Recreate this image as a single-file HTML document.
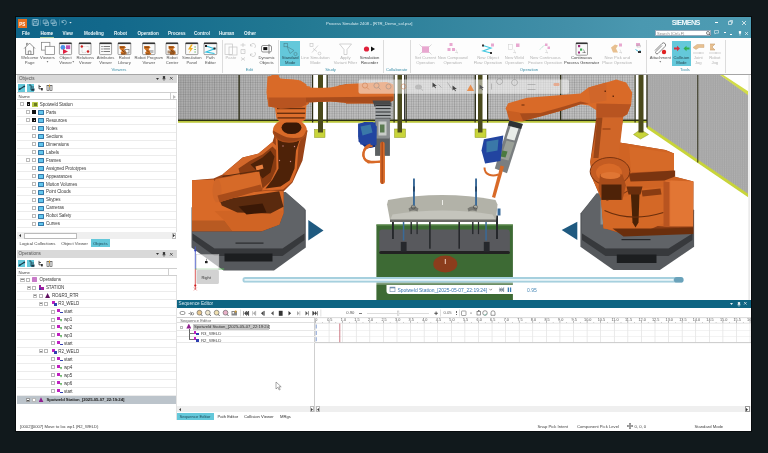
<!DOCTYPE html>
<html><head><meta charset="utf-8">
<style>
*{margin:0;padding:0;box-sizing:border-box}
html,body{width:768px;height:453px;overflow:hidden;background:#11191c;font-family:"Liberation Sans",sans-serif}
body{will-change:transform}
div,span,svg{position:absolute}
.t{white-space:nowrap;font-size:4.4px;color:#333;line-height:5px}
.tab{top:31px;font-size:4.6px;color:#e6f2f6;white-space:nowrap;font-weight:bold;letter-spacing:-0.05px}
.rl{font-size:4.2px;color:#555;text-align:center;line-height:4.6px;white-space:nowrap}
.rl.d{color:#aaa}
.gl{top:67.5px;font-size:4.4px;color:#3b8fa9;white-space:nowrap}
.sep{top:40px;width:1px;height:32px;background:#e0e0e0}
.ph{background:#d9d9d9;font-size:4.6px;color:#555;line-height:8px;padding-left:2px;white-space:nowrap}
.hl{background:#5ec3d8}
.row{height:8px;border-bottom:1px solid #efefef}
.cbx{width:4px;height:4px;border:0.6px solid #777;background:#fff}
.ex{width:4px;height:4px;border:0.5px solid #aaa;background:#fff}
.fd{width:6px;height:4.5px;background:#3aa8d8;border-radius:0.5px}
</style></head><body>
<div style="left:15px;top:16px;width:737.3px;height:416px;background:#080c0e"></div>
<div style="left:16px;top:17px;width:735px;height:413.6px;background:#fff"></div>
<!-- TITLE -->
<div style="left:16px;top:17px;width:735px;height:20.5px;background:linear-gradient(90deg,#0f6488 0%,#12688b 12%,#217892 37%,#428fa8 75%,#4a98b0 85%,#4e9cb3 100%)"></div>
<div style="left:17.5px;top:18.7px;width:9.5px;height:9px;background:#e8701e;color:#fff;font-size:4.5px;font-weight:bold;line-height:11px;text-align:center">PS</div>
<div class="tab" style="left:22px">File</div>
<svg style="left:30px;top:18px;position:absolute" width="45" height="9" viewBox="30 18 45 9"><g fill="none" stroke="#9cc4d6" stroke-width="0.7"><rect x="32.3" y="19.5" width="6.2" height="5.8" rx="0.6"/><rect x="33.8" y="19.5" width="3.2" height="2"/><rect x="33.5" y="23" width="3.8" height="2.3"/><path d="M43.2,20 h4 v3.5 h-4 z M45,22 h3.5 v3.5 h-3.5 z M51,20 h4 v3.5 h-4 z M52.8,22 h3.5 v3.5 h-3.5 z"/><path d="M62,22.5 a2.2,2.2 0 1 1 2.2,2.2 M62,20.5 v2 h2"/></g><rect x="40.3" y="19.5" width="0.5" height="6" fill="#5a9ab4"/><rect x="59" y="19.5" width="0.5" height="6" fill="#5a9ab4"/><path d="M69.3,22 h2.4 l-1.2,1.4 z" fill="#dceaf0"/></svg>
<div class="tab" style="left:40.5px;color:#fff">Home</div>
<div style="left:40px;top:36.5px;width:14px;height:1.2px;background:#a4c89c"></div>
<div class="tab" style="left:62.5px">View</div>
<div class="tab" style="left:84px">Modeling</div>
<div class="tab" style="left:114px">Robot</div>
<div class="tab" style="left:137.5px">Operation</div>
<div class="tab" style="left:168px">Process</div>
<div class="tab" style="left:194px">Control</div>
<div class="tab" style="left:219px">Human</div>
<div class="tab" style="left:244px">Other</div>
<div class="t" style="left:326px;top:20.5px;color:#d8ecf2;font-size:4.2px">Process Simulate 2408 - [RTR_Demo_sol.psz]</div>
<div style="left:671.8px;top:18.6px;font-size:7.3px;color:#eef7fa;font-weight:bold;white-space:nowrap;letter-spacing:-0.7px;line-height:8px">SIEMENS</div>
<div style="left:714.5px;top:22.3px;width:3px;height:0.7px;background:#fff"></div>
<svg style="left:728px;top:20px;position:absolute" width="5" height="5" viewBox="0 0 5 5"><path d="M1.5,0.5 h3 v3 M0.5,1.5 h3 v3 h-3 z" fill="none" stroke="#fff" stroke-width="0.6"/></svg>
<svg style="left:742px;top:20.5px;position:absolute" width="4" height="4" viewBox="0 0 4 4"><path d="M0,0 L4,4 M4,0 L0,4" stroke="#fff" stroke-width="0.7"/></svg>
<div style="left:655px;top:30px;width:56px;height:6px;background:#fff;border:0.5px solid #9ab"></div>
<div class="t" style="left:657px;top:30.5px;color:#888;font-size:4px">Search (Ctrl+F)</div>
<svg style="left:706px;top:30.5px;position:absolute" width="5" height="5" viewBox="0 0 5 5"><circle cx="2" cy="2" r="1.5" fill="none" stroke="#333" stroke-width="0.6"/><path d="M3,3 L4.5,4.5" stroke="#333" stroke-width="0.7"/></svg>
<svg style="left:714px;top:30px;position:absolute" width="5" height="5" viewBox="0 0 5 5"><path d="M0.5,0.5 h4 v2.6 h-2.6 l-1,1 v-1 h-0.4 z" fill="none" stroke="#fff" stroke-width="0.5"/></svg>
<div style="left:724.3px;top:32px;width:1.5px;height:0.6px;background:#fff"></div>
<div style="left:730px;top:34px;width:2px;height:0.6px;background:#fff"></div>
<svg style="left:737.5px;top:31px;position:absolute" width="4" height="5" viewBox="0 0 4 5"><rect x="0.9" y="0" width="2.2" height="2.8" rx="0.6" fill="#fff"/><rect x="1.7" y="2.8" width="0.6" height="1.8" fill="#fff"/></svg>
<svg style="left:745px;top:31.5px;position:absolute" width="3" height="3" viewBox="0 0 3 3"><path d="M0,0 L3,3 M3,0 L0,3" stroke="#fff" stroke-width="0.6"/></svg>
<!-- RIBBON -->
<div style="left:16px;top:37.5px;width:735px;height:37px;background:#fdfdfd;border-bottom:1px solid #a6a6a6"></div>
<div style="left:280.4px;top:40.9px;width:19.6px;height:24.8px;background:#64c8da;"></div>
<div style="left:671.9px;top:41.2px;width:19px;height:24.8px;background:#64c8da;"></div>
<div style="left:221.7px;top:39.5px;width:0.6px;height:33px;background:#dcdcdc;"></div>
<div style="left:277.9px;top:39.5px;width:0.6px;height:33px;background:#dcdcdc;"></div>
<div style="left:383px;top:39.5px;width:0.6px;height:33px;background:#dcdcdc;"></div>
<div style="left:410.3px;top:39.5px;width:0.6px;height:33px;background:#dcdcdc;"></div>
<div style="left:646px;top:39.5px;width:0.6px;height:33px;background:#dcdcdc;"></div>
<div style="left:724.6px;top:39.5px;width:0.6px;height:33px;background:#dcdcdc;"></div>
<div class="t" style="left:-10.399999999999999px;width:80px;text-align:center;top:55.3px;font-size:4.2px;color:#555;">Welcome</div>
<div class="t" style="left:-10.399999999999999px;width:80px;text-align:center;top:59.9px;font-size:4.2px;color:#555;">Page</div>
<div class="t" style="left:7.5px;width:80px;text-align:center;top:55.3px;font-size:4.2px;color:#555;">Viewers</div>
<div class="t" style="left:25.5px;width:80px;text-align:center;top:55.3px;font-size:4.2px;color:#555;">Object</div>
<div class="t" style="left:25.5px;width:80px;text-align:center;top:59.9px;font-size:4.2px;color:#555;">Viewer</div>
<div class="t" style="left:45.3px;width:80px;text-align:center;top:55.3px;font-size:4.2px;color:#555;">Relations</div>
<div class="t" style="left:45.3px;width:80px;text-align:center;top:59.9px;font-size:4.2px;color:#555;">Viewer</div>
<div class="t" style="left:65.6px;width:80px;text-align:center;top:55.3px;font-size:4.2px;color:#555;">Attributes</div>
<div class="t" style="left:65.6px;width:80px;text-align:center;top:59.9px;font-size:4.2px;color:#555;">Viewer</div>
<div class="t" style="left:84.4px;width:80px;text-align:center;top:55.3px;font-size:4.2px;color:#555;">Robot</div>
<div class="t" style="left:84.4px;width:80px;text-align:center;top:59.9px;font-size:4.2px;color:#555;">Library</div>
<div class="t" style="left:108.80000000000001px;width:80px;text-align:center;top:55.3px;font-size:4.2px;color:#555;">Robot Program</div>
<div class="t" style="left:108.80000000000001px;width:80px;text-align:center;top:59.9px;font-size:4.2px;color:#555;">Viewer</div>
<div class="t" style="left:132px;width:80px;text-align:center;top:55.3px;font-size:4.2px;color:#555;">Robot</div>
<div class="t" style="left:132px;width:80px;text-align:center;top:59.9px;font-size:4.2px;color:#555;">Center</div>
<div class="t" style="left:151.8px;width:80px;text-align:center;top:55.3px;font-size:4.2px;color:#555;">Simulation</div>
<div class="t" style="left:151.8px;width:80px;text-align:center;top:59.9px;font-size:4.2px;color:#555;">Panel</div>
<div class="t" style="left:170.4px;width:80px;text-align:center;top:55.3px;font-size:4.2px;color:#555;">Path</div>
<div class="t" style="left:170.4px;width:80px;text-align:center;top:59.9px;font-size:4.2px;color:#555;">Editor</div>
<div class="t" style="left:190.9px;width:80px;text-align:center;top:55.3px;font-size:4.2px;color:#b4b4b4;">Paste</div>
<div class="t" style="left:226.60000000000002px;width:80px;text-align:center;top:55.3px;font-size:4.2px;color:#555;">Dynamic</div>
<div class="t" style="left:226.60000000000002px;width:80px;text-align:center;top:59.9px;font-size:4.2px;color:#555;">Objects</div>
<div class="t" style="left:250.2px;width:80px;text-align:center;top:55.3px;font-size:4.2px;color:#2a4a55;">Standard</div>
<div class="t" style="left:250.2px;width:80px;text-align:center;top:59.9px;font-size:4.2px;color:#2a4a55;">Mode</div>
<div class="t" style="left:275.4px;width:80px;text-align:center;top:55.3px;font-size:4.2px;color:#b4b4b4;">Line Simulation</div>
<div class="t" style="left:275.4px;width:80px;text-align:center;top:59.9px;font-size:4.2px;color:#b4b4b4;">Mode</div>
<div class="t" style="left:305.4px;width:80px;text-align:center;top:55.3px;font-size:4.2px;color:#b4b4b4;">Apply</div>
<div class="t" style="left:305.4px;width:80px;text-align:center;top:59.9px;font-size:4.2px;color:#b4b4b4;">Variant Filter</div>
<div class="t" style="left:329.5px;width:80px;text-align:center;top:55.3px;font-size:4.2px;color:#444;">Simulation</div>
<div class="t" style="left:329.5px;width:80px;text-align:center;top:59.9px;font-size:4.2px;color:#444;">Recorder</div>
<div class="t" style="left:385.4px;width:80px;text-align:center;top:55.3px;font-size:4.2px;color:#b4b4b4;">Set Current</div>
<div class="t" style="left:385.4px;width:80px;text-align:center;top:59.9px;font-size:4.2px;color:#b4b4b4;">Operation</div>
<div class="t" style="left:412.7px;width:80px;text-align:center;top:55.3px;font-size:4.2px;color:#b4b4b4;">New Compound</div>
<div class="t" style="left:412.7px;width:80px;text-align:center;top:59.9px;font-size:4.2px;color:#b4b4b4;">Operation</div>
<div class="t" style="left:448px;width:80px;text-align:center;top:55.3px;font-size:4.2px;color:#b4b4b4;">New Object</div>
<div class="t" style="left:448px;width:80px;text-align:center;top:59.9px;font-size:4.2px;color:#b4b4b4;">Flow Operation</div>
<div class="t" style="left:474.29999999999995px;width:80px;text-align:center;top:55.3px;font-size:4.2px;color:#b4b4b4;">New Weld</div>
<div class="t" style="left:474.29999999999995px;width:80px;text-align:center;top:59.9px;font-size:4.2px;color:#b4b4b4;">Operation</div>
<div class="t" style="left:505.29999999999995px;width:80px;text-align:center;top:55.3px;font-size:4.2px;color:#b4b4b4;">New Continuous</div>
<div class="t" style="left:505.29999999999995px;width:80px;text-align:center;top:59.9px;font-size:4.2px;color:#b4b4b4;">Feature Operation</div>
<div class="t" style="left:541.5px;width:80px;text-align:center;top:55.3px;font-size:4.2px;color:#444;">Continuous</div>
<div class="t" style="left:541.5px;width:80px;text-align:center;top:59.9px;font-size:4.2px;color:#444;">Process Generator</div>
<div class="t" style="left:577.2px;width:80px;text-align:center;top:55.3px;font-size:4.2px;color:#b4b4b4;">New Pick and</div>
<div class="t" style="left:577.2px;width:80px;text-align:center;top:59.9px;font-size:4.2px;color:#b4b4b4;">Place Operation</div>
<div class="t" style="left:620.3px;width:80px;text-align:center;top:55.3px;font-size:4.2px;color:#555;">Attachment</div>
<div class="t" style="left:641.4px;width:80px;text-align:center;top:55.3px;font-size:4.2px;color:#2a4a55;">Collision</div>
<div class="t" style="left:641.4px;width:80px;text-align:center;top:59.9px;font-size:4.2px;color:#2a4a55;">Mode</div>
<div class="t" style="left:658.3px;width:80px;text-align:center;top:55.3px;font-size:4.2px;color:#b4b4b4;">Joint</div>
<div class="t" style="left:658.3px;width:80px;text-align:center;top:59.9px;font-size:4.2px;color:#b4b4b4;">Jog</div>
<div class="t" style="left:674.8px;width:80px;text-align:center;top:55.3px;font-size:4.2px;color:#b4b4b4;">Robot</div>
<div class="t" style="left:674.8px;width:80px;text-align:center;top:59.9px;font-size:4.2px;color:#b4b4b4;">Jog</div>
<div class="t" style="left:79px;width:80px;text-align:center;top:67.2px;font-size:4.2px;color:#3b8fa9;">Viewers</div>
<div class="t" style="left:209.4px;width:80px;text-align:center;top:67.2px;font-size:4.2px;color:#3b8fa9;">Edit</div>
<div class="t" style="left:290.6px;width:80px;text-align:center;top:67.2px;font-size:4.2px;color:#3b8fa9;">Study</div>
<div class="t" style="left:356.6px;width:80px;text-align:center;top:67.2px;font-size:4.2px;color:#3b8fa9;">Collaborate</div>
<div class="t" style="left:489px;width:80px;text-align:center;top:67.2px;font-size:4.2px;color:#3b8fa9;">Operation</div>
<div class="t" style="left:645px;width:80px;text-align:center;top:67.2px;font-size:4.2px;color:#3b8fa9;">Tools</div>
<svg style="left:0;top:0;position:absolute" width="768" height="80" viewBox="0 0 768 80"><polygon points="46.6,61.3 48.4,61.3 47.5,62.5" fill="#555"/><polygon points="72.4,61.3 74.2,61.3 73.3,62.5" fill="#555"/><polygon points="659.4,61.3 661.2,61.3 660.3,62.5" fill="#555"/></svg><svg style="left:16px;top:37.5px;position:absolute" width="735" height="37" viewBox="16 37.5 735 37"><path d="M24.2,48 L29.6,42.6 L35,48 M25.6,46.6 V54 H33.6 V46.6 M28.3,54 V50.5 H30.9 V54 M26.5,45 V42.8 H27.6 V44" fill="none" stroke="#666" stroke-width="0.7"/><rect x="41.5" y="41.8" width="8.4" height="7.8" fill="#fff" stroke="#777" stroke-width="0.7"/><rect x="45.2" y="45.8" width="9.2" height="8.3" fill="#fff" stroke="#777" stroke-width="0.7"/><rect x="59.4" y="42.2" width="12.2" height="11.9" rx="0.8" fill="#fafafa" stroke="#777" stroke-width="0.7"/><rect x="59.4" y="42.2" width="12.2" height="1.4" fill="#333"/><circle cx="62.9" cy="46.9" r="2.4" fill="#4a90e8"/><rect x="66" y="44.8" width="4.2" height="3.8" fill="#c850b0"/><path d="M63,48.6 L68,51 L63,53.4 Z" fill="#e02040"/><rect x="79" y="42.2" width="12" height="11.9" rx="0.8" fill="#fafafa" stroke="#777" stroke-width="0.7"/><rect x="79" y="42.2" width="12" height="1.4" fill="#333"/><circle cx="81.8" cy="46" r="1.2" fill="#d02020"/><circle cx="88" cy="51" r="1.3" fill="#d02020"/><path d="M83,46 H89 V50 M82,48 V52 H86" fill="none" stroke="#999" stroke-width="0.4" stroke-dasharray="0.8,0.6"/><rect x="99.6" y="42.2" width="12" height="11.9" rx="0.8" fill="#fafafa" stroke="#777" stroke-width="0.7"/><rect x="99.6" y="42.2" width="12" height="1.4" fill="#333"/><g fill="#444"><rect x="101.5" y="45.5" width="1" height="1"/><rect x="101.5" y="48" width="1" height="1"/><rect x="101.5" y="50.5" width="1" height="1"/><rect x="103.5" y="45.6" width="6.5" height="0.7"/><rect x="103.5" y="48.1" width="6.5" height="0.7"/><rect x="103.5" y="50.6" width="6.5" height="0.7"/></g><rect x="118" y="42.2" width="12.8" height="11.9" rx="0.8" fill="#fafafa" stroke="#777" stroke-width="0.7"/><rect x="118" y="42.2" width="12.8" height="1.4" fill="#333"/><path d="M119.5,45.5 h5 l1.5,1.5 l-2,1.5 l2.5,3.5 v2 h-5 l-1,-2 l1.5,-1.5 l-2.5,-2.5 z" fill="#d07020"/><path d="M120,46.7 h4.5 M122,49.5 l2.5,2.5 M121,53.5 h4" stroke="#5a3010" stroke-width="0.7"/><rect x="125" y="49" width="4" height="3.5" fill="none" stroke="#555" stroke-width="0.6"/><rect x="142.6" y="42.2" width="12.4" height="11.9" rx="0.8" fill="#fafafa" stroke="#777" stroke-width="0.7"/><rect x="142.6" y="42.2" width="12.4" height="1.4" fill="#333"/><path d="M144.1,45.5 h5 l1.5,1.5 l-2,1.5 l2.5,3.5 v2 h-5 l-1,-2 l1.5,-1.5 l-2.5,-2.5 z" fill="#d07020"/><path d="M144.6,46.7 h4.5 M146.6,49.5 l2.5,2.5 M145.6,53.5 h4" stroke="#5a3010" stroke-width="0.7"/><rect x="150" y="49.5" width="3.5" height="3" fill="#bbb"/><rect x="166" y="42.2" width="12" height="11.9" rx="0.8" fill="#fafafa" stroke="#777" stroke-width="0.7"/><rect x="166" y="42.2" width="12" height="1.4" fill="#333"/><path d="M168.5,45.5 h5 l1.5,1.5 l-2,1.5 l2.5,3.5 v2 h-5 l-1,-2 l1.5,-1.5 l-2.5,-2.5 z" fill="#d07020"/><path d="M169,46.7 h4.5 M171,49.5 l2.5,2.5 M170,53.5 h4" stroke="#5a3010" stroke-width="0.7"/><rect x="167.5" y="50" width="8" height="3" fill="#7a4a20" opacity="0.6"/><rect x="185.6" y="42.2" width="12.3" height="11.9" rx="0.8" fill="#fafafa" stroke="#777" stroke-width="0.7"/><rect x="185.6" y="42.2" width="12.3" height="1.4" fill="#333"/><path d="M191,44 L188,49 H190.5 L188.8,53 L193,47.5 H190.8 L192.8,44 Z" fill="#f0b020"/><g fill="#4a4"><rect x="194.5" y="46" width="1.2" height="1"/><rect x="194.5" y="48.5" width="1.2" height="1"/><rect x="194.5" y="51" width="1.2" height="1"/></g><rect x="204" y="42.2" width="12.8" height="11.9" rx="0.8" fill="#fafafa" stroke="#777" stroke-width="0.7"/><rect x="204" y="42.2" width="12.8" height="1.4" fill="#333"/><path d="M206,45.5 L214.5,48.2 L206,51.5 L214.5,53" fill="none" stroke="#30c0e0" stroke-width="1.2"/><rect x="205" y="44.5" width="2" height="2" fill="#222"/><rect x="213.5" y="47" width="2" height="2" fill="#222"/><g fill="none" stroke="#c4c4c4" stroke-width="0.7"><rect x="225" y="43.5" width="7.5" height="10.5"/><rect x="229" y="46.5" width="8" height="8"/><path d="M240.5,44.5 h5 M243,42.5 v4 M241,49 h4 v4 h-4 z M243,50 l1,1 M241,57 l4,3 M245,57 l-4,3 M250.5,45.5 a2.5,2.5 0 1 1 4,2 M250.5,43.5 v2 h2 M250.5,53.5 a2.5,2.5 0 1 0 4,-2 M250.5,55.5 v-2 h2"/></g><rect x="261.5" y="45" width="10" height="6.5" rx="1.5" fill="#fff" stroke="#666" stroke-width="0.7"/><rect x="263.3" y="46.6" width="4" height="3" fill="#111"/><path d="M269,43.5 v10" stroke="#666" stroke-width="0.7"/><g fill="none" stroke="#4a7a86" stroke-width="0.55"><rect x="284" y="42.8" width="3.5" height="3.5"/><path d="M287,46 L290,53 L294,50 Z"/><circle cx="295.5" cy="53.5" r="1.6"/></g><g fill="none" stroke="#c0c0c0" stroke-width="0.6"><rect x="310" y="43" width="3" height="3"/><path d="M312,52 L318,45 M313,48 L317,51"/><circle cx="319.5" cy="53" r="1.4"/></g><path d="M339.5,43.5 H351.5 L347,49 V54 H344 V49 Z" fill="#fff" stroke="#c0c0c0" stroke-width="0.7"/><circle cx="366.5" cy="48.5" r="2.6" fill="#e0203a"/><path d="M371,46 L375,48.5 L371,51 Z" fill="#111"/><g stroke="#c0c0c0" stroke-width="0.6" fill="none"><path d="M419.5,44 l2.5,2.5 M431.5,44 l-2.5,2.5 M419.5,54 l2.5,-2.5 M431.5,54 l-2.5,-2.5"/></g><rect x="422" y="45.8" width="7" height="6.5" fill="#e8a8d0"/><g fill="#e8a8d0"><rect x="449.5" y="42.5" width="3" height="3"/><rect x="447.5" y="47.5" width="3" height="3"/><rect x="452" y="47.5" width="3" height="3"/></g><path d="M456,49 l1.5,4 M455,52 h3" stroke="#ccc" stroke-width="0.5"/><path d="M483,45 L491,47.5 L483,50.5 L491,52.5" fill="none" stroke="#40c8e0" stroke-width="1.1"/><rect x="482" y="44" width="2" height="2" fill="#333"/><rect x="490" y="51.5" width="2" height="2" fill="#333"/><rect x="491" y="43" width="3" height="3" fill="#e8a8d0"/><g fill="none" stroke="#ccc" stroke-width="0.5"><rect x="508.5" y="44" width="4" height="5"/></g><rect x="516" y="43" width="3.5" height="3.5" fill="#e8a8d0"/><path d="M514,49 l1.5,4 M513,52 h3" stroke="#ccc" stroke-width="0.5"/><path d="M540,49 q3,-4 7,-5" fill="none" stroke="#a8e0c8" stroke-width="1" stroke-dasharray="1,0.6"/><g fill="#e8a8d0"><rect x="545" y="43" width="2.5" height="2.5"/><rect x="547.5" y="46" width="2.5" height="2.5"/></g><path d="M546,49 l1.5,4 M545,52 h3" stroke="#ccc" stroke-width="0.5"/><rect x="576" y="42.2" width="11.5" height="12.5" rx="0.8" fill="#fafafa" stroke="#777" stroke-width="0.7"/><rect x="576" y="42.2" width="11.5" height="1.4" fill="#333"/><rect x="578" y="44.5" width="2.2" height="2.2" fill="#a03080"/><rect x="580" y="48" width="2.2" height="2.2" fill="#3aaa50"/><rect x="578" y="51" width="2" height="2" fill="#a03080"/><path d="M583.5,49 l1.5,3.5 M582.5,52 h3" stroke="#444" stroke-width="0.5"/><path d="M611,47 l4,-3 l3,1 l-2,3 l2,4 h-5 z" fill="#e8c090"/><rect x="619" y="43" width="3" height="3" fill="#e8a8d0"/><path d="M620,49 l1.5,4 M619,52 h3" stroke="#ccc" stroke-width="0.5"/><rect x="636" y="42.5" width="4" height="3" fill="#e8a8d0"/><rect x="637" y="44.5" width="3.5" height="2" fill="none" stroke="#999" stroke-width="0.4"/><path d="M635.5,49 l3,2 l2,-1" stroke="#40b8d8" stroke-width="1" fill="none"/><rect x="638" y="50.5" width="3" height="2" fill="#333"/><path d="M655,50 l7,-7 a2,2 0 0 1 3,3 l-7,7 a1.3,1.3 0 0 1 -2,-2 l6,-6" fill="none" stroke="#555" stroke-width="0.7"/><circle cx="664" cy="51.5" r="2.2" fill="#e02020"/><path d="M674,47 h3 v-1.8 l3,2.8 l-3,2.8 v-1.8 h-3 z" fill="#d83040"/><path d="M689.5,47 h-3 v-1.8 l-3,2.8 l3,2.8 v-1.8 h3 z" fill="#30b050"/><path d="M693,47 l4,-3 h7 v3 h-5 l-3,2 z" fill="#e8c090" stroke="#c8a070" stroke-width="0.4"/><path d="M693,52.5 h11 M700,51.5 v2" stroke="#bbb" stroke-width="0.6"/><path d="M710,43.5 h5 l-3,3 l3,3 h-5" fill="#e8c090" stroke="#c8a070" stroke-width="0.6"/><path d="M709,52.5 h12 M716,51.5 v2" stroke="#bbb" stroke-width="0.6"/></svg>

<!-- OBJECTS PANEL -->
<div class="ph" style="left:17px;top:74.5px;width:160px;height:8px">Objects</div>
<svg style="left:156.2px;top:77.8px;position:absolute;overflow:visible" width="3" height="2" viewBox="0 0 3 2"><polygon points="0,0 3,0 1.5,2" fill="#333"/></svg>
<svg style="left:162.4px;top:76.3px;position:absolute;overflow:visible" width="4" height="5" viewBox="0 0 4 5"><rect x="0.9" y="0" width="2.2" height="2.8" rx="0.6" fill="#333"/><rect x="0.3" y="2.6" width="3.4" height="0.6" fill="#333"/><rect x="1.7" y="3" width="0.6" height="1.8" fill="#333"/></svg>
<svg style="left:170.2px;top:77px;position:absolute;overflow:visible" width="2.6" height="2.6" viewBox="0 0 2.6 2.6"><path d="M0,0 L2.6,2.6 M2.6,0 L0,2.6" stroke="#333" stroke-width="0.7"/></svg>
<div style="left:17.6px;top:84px;width:7.4px;height:7.8px;background:#64c8da;"></div>
<div style="left:27px;top:84px;width:7.3px;height:7.8px;background:#64c8da;"></div>
<svg style="left:17px;top:83px;position:absolute;overflow:visible" width="40" height="9" viewBox="0 0 40 9"><path d="M3,6 L7,3.5" stroke="#1a3a4a" stroke-width="1.1"/><circle cx="2.6" cy="6.2" r="0.9" fill="#1a3a4a"/><circle cx="7.3" cy="3.3" r="0.9" fill="#1a3a4a"/><path d="M12,2 h2 v5 h3 M14,4 h3" fill="none" stroke="#1a3a4a" stroke-width="0.8"/><rect x="14.5" y="5.5" width="3" height="2.2" fill="#1a3a4a"/><path d="M22,1.8 v4 h2.5 M22,3.5 h2" fill="none" stroke="#333" stroke-width="0.8"/><rect x="24" y="5" width="1.8" height="2.4" fill="#333"/><rect x="30" y="2.5" width="2" height="5" fill="none" stroke="#333" stroke-width="0.6"/><rect x="33" y="2.5" width="2" height="5" fill="none" stroke="#333" stroke-width="0.6"/><rect x="32" y="1.5" width="1" height="2.5" fill="#d8a030"/></svg>
<div style="left:17px;top:92.3px;width:160px;height:8.1px;background:#fff;border-top:0.8px solid #cfcfcf;border-bottom:0.8px solid #cfcfcf"></div>
<div style="left:170.3px;top:92.5px;width:0.7px;height:7.6px;background:#cfcfcf;"></div>
<div class="t" style="left:18.4px;top:94px;font-size:4.3px;color:#444;">Name</div>
<svg style="left:172.5px;top:94.6px;position:absolute;overflow:visible" width="3" height="4" viewBox="0 0 3 4"><polygon points="0,0 3,2.0 0,4" fill="#bbb"/></svg>
<div style="left:17px;top:107.60000000000001px;width:159px;height:0.7px;background:#ececec;"></div>
<div style="left:20px;top:102.4px;width:4.4px;height:4px;background:#fff;border:0.5px solid #bbb"></div>
<div style="left:26.6px;top:102.4px;width:3.5px;height:3.8px;background:#111;clip-path:polygon(0 0,100% 0,0 100%)"></div>
<div style="left:26.6px;top:102.4px;width:3.5px;height:3.8px;background:transparent;border:0.5px solid #111"></div>
<div style="left:32.3px;top:101.9px;width:5.3px;height:4.8px;background:#b8c848;border-radius:0.5px"></div>
<div style="left:33.5px;top:103.4px;width:3px;height:2.5px;background:#6a7a20;"></div>
<div class="t" style="left:39.8px;top:101.7px;font-size:4.5px;color:#383838;letter-spacing:-0.06px">Spotweld Station</div>
<div style="left:17px;top:115.58000000000001px;width:159px;height:0.7px;background:#ececec;"></div>
<div style="left:26.1px;top:110.38000000000001px;width:4.4px;height:4px;background:#fff;border:0.5px solid #bbb"></div>
<div style="left:32.3px;top:110.38000000000001px;width:4px;height:3.8px;background:#111;"></div>
<div style="left:38px;top:110.18px;width:6.2px;height:4.6px;background:#62c6ee;border:0.55px solid #3478a8;border-radius:0.6px"></div>
<div class="t" style="left:46px;top:109.68px;font-size:4.5px;color:#383838;letter-spacing:-0.06px">Parts</div>
<div style="left:17px;top:123.56000000000002px;width:159px;height:0.7px;background:#ececec;"></div>
<div style="left:26.1px;top:118.36000000000001px;width:4.4px;height:4px;background:#fff;border:0.5px solid #bbb"></div>
<div style="left:32.3px;top:118.36000000000001px;width:4px;height:3.8px;background:#111;clip-path:polygon(0 0,100% 0,0 100%)"></div>
<div style="left:32.3px;top:118.36000000000001px;width:4px;height:3.8px;background:transparent;border:0.5px solid #111"></div>
<div style="left:38px;top:118.16000000000001px;width:6.2px;height:4.6px;background:#62c6ee;border:0.55px solid #3478a8;border-radius:0.6px"></div>
<div class="t" style="left:46px;top:117.66000000000001px;font-size:4.5px;color:#383838;letter-spacing:-0.06px">Resources</div>
<div style="left:17px;top:131.54px;width:159px;height:0.7px;background:#ececec;"></div>
<div style="left:32px;top:126.34px;width:4px;height:4px;background:#fff;border:0.5px solid #b8b8b8"></div>
<div style="left:38px;top:126.14px;width:6.2px;height:4.6px;background:#62c6ee;border:0.55px solid #3478a8;border-radius:0.6px"></div>
<div class="t" style="left:46px;top:125.64px;font-size:4.5px;color:#383838;letter-spacing:-0.06px">Notes</div>
<div style="left:17px;top:139.51999999999998px;width:159px;height:0.7px;background:#ececec;"></div>
<div style="left:32px;top:134.32px;width:4px;height:4px;background:#fff;border:0.5px solid #b8b8b8"></div>
<div style="left:38px;top:134.12px;width:6.2px;height:4.6px;background:#62c6ee;border:0.55px solid #3478a8;border-radius:0.6px"></div>
<div class="t" style="left:46px;top:133.62px;font-size:4.5px;color:#383838;letter-spacing:-0.06px">Sections</div>
<div style="left:17px;top:147.5px;width:159px;height:0.7px;background:#ececec;"></div>
<div style="left:32px;top:142.3px;width:4px;height:4px;background:#fff;border:0.5px solid #b8b8b8"></div>
<div style="left:38px;top:142.10000000000002px;width:6.2px;height:4.6px;background:#62c6ee;border:0.55px solid #3478a8;border-radius:0.6px"></div>
<div class="t" style="left:46px;top:141.60000000000002px;font-size:4.5px;color:#383838;letter-spacing:-0.06px">Dimensions</div>
<div style="left:17px;top:155.48px;width:159px;height:0.7px;background:#ececec;"></div>
<div style="left:32px;top:150.28px;width:4px;height:4px;background:#fff;border:0.5px solid #b8b8b8"></div>
<div style="left:38px;top:150.08px;width:6.2px;height:4.6px;background:#62c6ee;border:0.55px solid #3478a8;border-radius:0.6px"></div>
<div class="t" style="left:46px;top:149.58px;font-size:4.5px;color:#383838;letter-spacing:-0.06px">Labels</div>
<div style="left:17px;top:163.45999999999998px;width:159px;height:0.7px;background:#ececec;"></div>
<div style="left:26.1px;top:158.26px;width:4.4px;height:4px;background:#fff;border:0.5px solid #bbb"></div>
<div style="left:32px;top:158.26px;width:4px;height:4px;background:#fff;border:0.5px solid #b8b8b8"></div>
<div style="left:38px;top:158.06px;width:6.2px;height:4.6px;background:#62c6ee;border:0.55px solid #3478a8;border-radius:0.6px"></div>
<div class="t" style="left:46px;top:157.56px;font-size:4.5px;color:#383838;letter-spacing:-0.06px">Frames</div>
<div style="left:17px;top:171.44px;width:159px;height:0.7px;background:#ececec;"></div>
<div style="left:32px;top:166.24px;width:4px;height:4px;background:#fff;border:0.5px solid #b8b8b8"></div>
<div style="left:38px;top:166.04000000000002px;width:6.2px;height:4.6px;background:#62c6ee;border:0.55px solid #3478a8;border-radius:0.6px"></div>
<div class="t" style="left:46px;top:165.54000000000002px;font-size:4.5px;color:#383838;letter-spacing:-0.06px">Assigned Prototypes</div>
<div style="left:17px;top:179.42000000000002px;width:159px;height:0.7px;background:#ececec;"></div>
<div style="left:32px;top:174.22000000000003px;width:4px;height:4px;background:#fff;border:0.5px solid #b8b8b8"></div>
<div style="left:38px;top:174.02000000000004px;width:6.2px;height:4.6px;background:#62c6ee;border:0.55px solid #3478a8;border-radius:0.6px"></div>
<div class="t" style="left:46px;top:173.52000000000004px;font-size:4.5px;color:#383838;letter-spacing:-0.06px">Appearances</div>
<div style="left:17px;top:187.4px;width:159px;height:0.7px;background:#ececec;"></div>
<div style="left:32px;top:182.20000000000002px;width:4px;height:4px;background:#fff;border:0.5px solid #b8b8b8"></div>
<div style="left:38px;top:182.00000000000003px;width:6.2px;height:4.6px;background:#62c6ee;border:0.55px solid #3478a8;border-radius:0.6px"></div>
<div class="t" style="left:46px;top:181.50000000000003px;font-size:4.5px;color:#383838;letter-spacing:-0.06px">Motion Volumes</div>
<div style="left:17px;top:195.38px;width:159px;height:0.7px;background:#ececec;"></div>
<div style="left:32px;top:190.18px;width:4px;height:4px;background:#fff;border:0.5px solid #b8b8b8"></div>
<div style="left:38px;top:189.98000000000002px;width:6.2px;height:4.6px;background:#62c6ee;border:0.55px solid #3478a8;border-radius:0.6px"></div>
<div class="t" style="left:46px;top:189.48000000000002px;font-size:4.5px;color:#383838;letter-spacing:-0.06px">Point Clouds</div>
<div style="left:17px;top:203.36px;width:159px;height:0.7px;background:#ececec;"></div>
<div style="left:32px;top:198.16000000000003px;width:4px;height:4px;background:#fff;border:0.5px solid #b8b8b8"></div>
<div style="left:38px;top:197.96000000000004px;width:6.2px;height:4.6px;background:#62c6ee;border:0.55px solid #3478a8;border-radius:0.6px"></div>
<div class="t" style="left:46px;top:197.46000000000004px;font-size:4.5px;color:#383838;letter-spacing:-0.06px">Skypes</div>
<div style="left:17px;top:211.34px;width:159px;height:0.7px;background:#ececec;"></div>
<div style="left:32px;top:206.14000000000001px;width:4px;height:4px;background:#fff;border:0.5px solid #b8b8b8"></div>
<div style="left:38px;top:205.94000000000003px;width:6.2px;height:4.6px;background:#62c6ee;border:0.55px solid #3478a8;border-radius:0.6px"></div>
<div class="t" style="left:46px;top:205.44000000000003px;font-size:4.5px;color:#383838;letter-spacing:-0.06px">Cameras</div>
<div style="left:17px;top:219.32px;width:159px;height:0.7px;background:#ececec;"></div>
<div style="left:32px;top:214.12px;width:4px;height:4px;background:#fff;border:0.5px solid #b8b8b8"></div>
<div style="left:38px;top:213.92000000000002px;width:6.2px;height:4.6px;background:#62c6ee;border:0.55px solid #3478a8;border-radius:0.6px"></div>
<div class="t" style="left:46px;top:213.42000000000002px;font-size:4.5px;color:#383838;letter-spacing:-0.06px">Robot Safety</div>
<div style="left:17px;top:227.3px;width:159px;height:0.7px;background:#ececec;"></div>
<div style="left:32px;top:222.10000000000002px;width:4px;height:4px;background:#fff;border:0.5px solid #b8b8b8"></div>
<div style="left:38px;top:221.90000000000003px;width:6.2px;height:4.6px;background:#62c6ee;border:0.55px solid #3478a8;border-radius:0.6px"></div>
<div class="t" style="left:46px;top:221.40000000000003px;font-size:4.5px;color:#383838;letter-spacing:-0.06px">Curves</div>
<div style="left:17px;top:232.2px;width:159px;height:7px;background:#efefef;"></div>
<svg style="left:19px;top:234px;position:absolute;overflow:visible" width="2" height="3.2" viewBox="0 0 2 3.2"><polygon points="2,0 0,1.6 2,3.2" fill="#333"/></svg>
<div style="left:23.8px;top:232.6px;width:53.4px;height:6.4px;background:#fff;border:0.6px solid #bbb"></div>
<div style="left:172px;top:233px;width:4px;height:6px;background:#fff;border:0.5px solid #bbb"></div>
<svg style="left:173px;top:234.4px;position:absolute;overflow:visible" width="2" height="3.2" viewBox="0 0 2 3.2"><polygon points="0,0 2,1.6 0,3.2" fill="#333"/></svg>
<div class="t" style="left:19.5px;top:241px;font-size:4.3px;color:#444;">Logical Collections</div>
<div class="t" style="left:61.2px;top:241px;font-size:4.3px;color:#444;">Object Viewer</div>
<div style="left:90.9px;top:239.3px;width:19.5px;height:7.8px;background:#64c8da;"></div>
<div class="t" style="left:93px;top:241px;font-size:4.3px;color:#1e4a5a;">Objects</div>
<div style="left:17px;top:250.3px;width:160px;height:7.5px;background:#d9d9d9;"></div>
<div class="t" style="left:18.4px;top:251.2px;font-size:4.6px;color:#555;">Operations</div>
<svg style="left:156.2px;top:253.3px;position:absolute;overflow:visible" width="3" height="2" viewBox="0 0 3 2"><polygon points="0,0 3,0 1.5,2" fill="#333"/></svg>
<svg style="left:162.4px;top:251.8px;position:absolute;overflow:visible" width="4" height="5" viewBox="0 0 4 5"><rect x="0.9" y="0" width="2.2" height="2.8" rx="0.6" fill="#333"/><rect x="0.3" y="2.6" width="3.4" height="0.6" fill="#333"/><rect x="1.7" y="3" width="0.6" height="1.8" fill="#333"/></svg>
<svg style="left:170.2px;top:252.6px;position:absolute;overflow:visible" width="2.6" height="2.6" viewBox="0 0 2.6 2.6"><path d="M0,0 L2.6,2.6 M2.6,0 L0,2.6" stroke="#333" stroke-width="0.7"/></svg>
<div style="left:17.6px;top:259.5px;width:7.4px;height:7.8px;background:#64c8da;"></div>
<div style="left:27px;top:259.5px;width:7.3px;height:7.8px;background:#64c8da;"></div>
<svg style="left:17px;top:258.5px;position:absolute;overflow:visible" width="40" height="9" viewBox="0 0 40 9"><path d="M3,6 L7,3.5" stroke="#1a3a4a" stroke-width="1.1"/><circle cx="2.6" cy="6.2" r="0.9" fill="#1a3a4a"/><circle cx="7.3" cy="3.3" r="0.9" fill="#1a3a4a"/><path d="M12,2 h2 v5 h3 M14,4 h3" fill="none" stroke="#1a3a4a" stroke-width="0.8"/><rect x="14.5" y="5.5" width="3" height="2.2" fill="#1a3a4a"/><path d="M22,1.8 v4 h2.5 M22,3.5 h2" fill="none" stroke="#333" stroke-width="0.8"/><rect x="24" y="5" width="1.8" height="2.4" fill="#333"/><rect x="30" y="2.5" width="2" height="5" fill="none" stroke="#333" stroke-width="0.6"/><rect x="33" y="2.5" width="2" height="5" fill="none" stroke="#333" stroke-width="0.6"/><rect x="32" y="1.5" width="1" height="2.5" fill="#d8a030"/></svg>
<div style="left:17px;top:268px;width:160px;height:7.6px;background:#fff;border-top:0.8px solid #cfcfcf;border-bottom:0.8px solid #cfcfcf"></div>
<div style="left:168px;top:268.3px;width:0.7px;height:7.2px;background:#cfcfcf;"></div>
<div class="t" style="left:18.4px;top:269.5px;font-size:4.3px;color:#444;">Name</div>
<div style="left:17px;top:282.8px;width:159px;height:0.7px;background:#ececec;"></div>
<div style="left:20.4px;top:277.6px;width:4.2px;height:4px;background:#fff;border:0.5px solid #c4c4c4"></div>
<div style="left:21.299999999999997px;top:279.3px;width:2.4px;height:0.5px;background:#888;"></div>
<div style="left:26.2px;top:277.6px;width:4px;height:4px;background:#fff;border:0.5px solid #b8b8b8"></div>
<div style="left:32.3px;top:277.1px;width:4.5px;height:5px;background:#c87ac8;border-radius:0.5px"></div>
<div class="t" style="left:39.5px;top:276.90000000000003px;font-size:4.5px;color:#383838;letter-spacing:-0.06px">Operations</div>
<div style="left:17px;top:290.78000000000003px;width:159px;height:0.7px;background:#ececec;"></div>
<div style="left:26.8px;top:285.58000000000004px;width:4.2px;height:4px;background:#fff;border:0.5px solid #c4c4c4"></div>
<div style="left:27.7px;top:287.28000000000003px;width:2.4px;height:0.5px;background:#888;"></div>
<div style="left:32.2px;top:285.58000000000004px;width:4px;height:4px;background:#fff;border:0.5px solid #b8b8b8"></div>
<div style="left:38.7px;top:285.28000000000003px;width:2.4px;height:2.4px;background:#a020a0;"></div>
<div style="left:41.2px;top:287.38000000000005px;width:2.4px;height:2.4px;background:#a020a0;"></div>
<div style="left:38.7px;top:287.78000000000003px;width:2.2px;height:2px;background:#4040a0;"></div>
<div class="t" style="left:45.9px;top:284.88000000000005px;font-size:4.5px;color:#383838;letter-spacing:-0.06px">STATION</div>
<div style="left:17px;top:298.76px;width:159px;height:0.7px;background:#ececec;"></div>
<div style="left:32.8px;top:293.56px;width:4.2px;height:4px;background:#fff;border:0.5px solid #c4c4c4"></div>
<div style="left:33.699999999999996px;top:295.26px;width:2.4px;height:0.5px;background:#888;"></div>
<div style="left:38.6px;top:293.56px;width:4px;height:4px;background:#fff;border:0.5px solid #b8b8b8"></div>
<div style="left:45.1px;top:293.06px;width:5px;height:5px;background:#601060;clip-path:polygon(50% 0,100% 100%,0 100%)"></div>
<div class="t" style="left:51.9px;top:292.86px;font-size:4.5px;color:#383838;letter-spacing:-0.06px">RO&amp;R3_RTR</div>
<div style="left:17px;top:306.74px;width:159px;height:0.7px;background:#ececec;"></div>
<div style="left:38.6px;top:301.54px;width:4.2px;height:4px;background:#fff;border:0.5px solid #c4c4c4"></div>
<div style="left:39.5px;top:303.24px;width:2.4px;height:0.5px;background:#888;"></div>
<div style="left:44.3px;top:301.54px;width:4px;height:4px;background:#fff;border:0.5px solid #b8b8b8"></div>
<div style="left:51.5px;top:300.94px;width:3px;height:3px;background:#c020c0;"></div>
<div style="left:53.8px;top:303.14000000000004px;width:3px;height:3px;background:#3040b0;"></div>
<div class="t" style="left:58.3px;top:300.84000000000003px;font-size:4.5px;color:#383838;letter-spacing:-0.06px">R3_WELD</div>
<div style="left:17px;top:314.72px;width:159px;height:0.7px;background:#ececec;"></div>
<div style="left:50.7px;top:309.52000000000004px;width:4px;height:4px;background:#fff;border:0.5px solid #b8b8b8"></div>
<div style="left:57.3px;top:308.92px;width:3px;height:3px;background:#c020c0;"></div>
<div style="left:59.8px;top:311.72px;width:3px;height:1px;background:#3040b0;"></div>
<div class="t" style="left:64px;top:308.82000000000005px;font-size:4.5px;color:#383838;letter-spacing:-0.06px">start</div>
<div style="left:17px;top:322.7px;width:159px;height:0.7px;background:#ececec;"></div>
<div style="left:50.7px;top:317.5px;width:4px;height:4px;background:#fff;border:0.5px solid #b8b8b8"></div>
<div style="left:57.3px;top:316.9px;width:3px;height:3px;background:#c020c0;"></div>
<div style="left:59.8px;top:319.3px;width:2.5px;height:2.4px;background:#40a040;clip-path:polygon(0 0,100% 0,50% 100%)"></div>
<div class="t" style="left:64px;top:316.8px;font-size:4.5px;color:#383838;letter-spacing:-0.06px">wp1</div>
<div style="left:17px;top:330.68px;width:159px;height:0.7px;background:#ececec;"></div>
<div style="left:50.7px;top:325.48px;width:4px;height:4px;background:#fff;border:0.5px solid #b8b8b8"></div>
<div style="left:57.3px;top:324.88px;width:3px;height:3px;background:#c020c0;"></div>
<div style="left:59.8px;top:327.28000000000003px;width:2.5px;height:2.4px;background:#40a040;clip-path:polygon(0 0,100% 0,50% 100%)"></div>
<div class="t" style="left:64px;top:324.78000000000003px;font-size:4.5px;color:#383838;letter-spacing:-0.06px">wp2</div>
<div style="left:17px;top:338.66px;width:159px;height:0.7px;background:#ececec;"></div>
<div style="left:50.7px;top:333.46000000000004px;width:4px;height:4px;background:#fff;border:0.5px solid #b8b8b8"></div>
<div style="left:57.3px;top:332.86px;width:3px;height:3px;background:#c020c0;"></div>
<div style="left:59.8px;top:335.26000000000005px;width:2.5px;height:2.4px;background:#40a040;clip-path:polygon(0 0,100% 0,50% 100%)"></div>
<div class="t" style="left:64px;top:332.76000000000005px;font-size:4.5px;color:#383838;letter-spacing:-0.06px">wp3</div>
<div style="left:17px;top:346.64000000000004px;width:159px;height:0.7px;background:#ececec;"></div>
<div style="left:50.7px;top:341.44000000000005px;width:4px;height:4px;background:#fff;border:0.5px solid #b8b8b8"></div>
<div style="left:57.3px;top:340.84000000000003px;width:3px;height:3px;background:#c020c0;"></div>
<div style="left:59.8px;top:343.64000000000004px;width:3px;height:1px;background:#3040b0;"></div>
<div class="t" style="left:64px;top:340.74000000000007px;font-size:4.5px;color:#383838;letter-spacing:-0.06px">start</div>
<div style="left:17px;top:354.62px;width:159px;height:0.7px;background:#ececec;"></div>
<div style="left:38.6px;top:349.42px;width:4.2px;height:4px;background:#fff;border:0.5px solid #c4c4c4"></div>
<div style="left:39.5px;top:351.12px;width:2.4px;height:0.5px;background:#888;"></div>
<div style="left:44.3px;top:349.42px;width:4px;height:4px;background:#fff;border:0.5px solid #b8b8b8"></div>
<div style="left:51.5px;top:348.82px;width:3px;height:3px;background:#c020c0;"></div>
<div style="left:53.8px;top:351.02000000000004px;width:3px;height:3px;background:#3040b0;"></div>
<div class="t" style="left:58.3px;top:348.72px;font-size:4.5px;color:#383838;letter-spacing:-0.06px">R2_WELD</div>
<div style="left:17px;top:362.6px;width:159px;height:0.7px;background:#ececec;"></div>
<div style="left:50.7px;top:357.40000000000003px;width:4px;height:4px;background:#fff;border:0.5px solid #b8b8b8"></div>
<div style="left:57.3px;top:356.8px;width:3px;height:3px;background:#c020c0;"></div>
<div style="left:59.8px;top:359.6px;width:3px;height:1px;background:#3040b0;"></div>
<div class="t" style="left:64px;top:356.70000000000005px;font-size:4.5px;color:#383838;letter-spacing:-0.06px">start</div>
<div style="left:17px;top:370.58px;width:159px;height:0.7px;background:#ececec;"></div>
<div style="left:50.7px;top:365.38px;width:4px;height:4px;background:#fff;border:0.5px solid #b8b8b8"></div>
<div style="left:57.3px;top:364.78px;width:3px;height:3px;background:#c020c0;"></div>
<div style="left:59.8px;top:367.18px;width:2.5px;height:2.4px;background:#40a040;clip-path:polygon(0 0,100% 0,50% 100%)"></div>
<div class="t" style="left:64px;top:364.68px;font-size:4.5px;color:#383838;letter-spacing:-0.06px">wp4</div>
<div style="left:17px;top:378.56px;width:159px;height:0.7px;background:#ececec;"></div>
<div style="left:50.7px;top:373.36px;width:4px;height:4px;background:#fff;border:0.5px solid #b8b8b8"></div>
<div style="left:57.3px;top:372.76px;width:3px;height:3px;background:#c020c0;"></div>
<div style="left:59.8px;top:375.16px;width:2.5px;height:2.4px;background:#40a040;clip-path:polygon(0 0,100% 0,50% 100%)"></div>
<div class="t" style="left:64px;top:372.66px;font-size:4.5px;color:#383838;letter-spacing:-0.06px">wp5</div>
<div style="left:17px;top:386.54px;width:159px;height:0.7px;background:#ececec;"></div>
<div style="left:50.7px;top:381.34000000000003px;width:4px;height:4px;background:#fff;border:0.5px solid #b8b8b8"></div>
<div style="left:57.3px;top:380.74px;width:3px;height:3px;background:#c020c0;"></div>
<div style="left:59.8px;top:383.14000000000004px;width:2.5px;height:2.4px;background:#40a040;clip-path:polygon(0 0,100% 0,50% 100%)"></div>
<div class="t" style="left:64px;top:380.64000000000004px;font-size:4.5px;color:#383838;letter-spacing:-0.06px">wp6</div>
<div style="left:17px;top:394.52000000000004px;width:159px;height:0.7px;background:#ececec;"></div>
<div style="left:50.7px;top:389.32000000000005px;width:4px;height:4px;background:#fff;border:0.5px solid #b8b8b8"></div>
<div style="left:57.3px;top:388.72px;width:3px;height:3px;background:#c020c0;"></div>
<div style="left:59.8px;top:391.52000000000004px;width:3px;height:1px;background:#3040b0;"></div>
<div class="t" style="left:64px;top:388.62000000000006px;font-size:4.5px;color:#383838;letter-spacing:-0.06px">start</div>
<div style="left:17px;top:395.8px;width:158.5px;height:7.8px;background:#bcc4cb;"></div>
<div style="left:26px;top:397.8px;width:4px;height:4px;background:#fff;border:0.5px solid #999"></div>
<div style="left:26.8px;top:399.6px;width:2.4px;height:0.5px;background:#555;"></div>
<div style="left:32.2px;top:397.8px;width:4px;height:4px;background:#fff;border:0.5px solid #b8b8b8"></div>
<div style="left:38.5px;top:397.3px;width:5px;height:5px;background:#902090;clip-path:polygon(50% 0,100% 100%,0 100%)"></div>
<div class="t" style="left:46.4px;top:397.2px;font-size:4.3px;color:#222;font-weight:bold;letter-spacing:-0.1px">Spotweld Station_[2025-05-07_22:19:24]</div>
<div style="left:176px;top:276px;width:0.7px;height:144px;background:#e2e2e2;"></div>
<div style="left:176px;top:100px;width:0.7px;height:132px;background:#e2e2e2;"></div>

<!-- VIEWPORT -->
<svg style="position:absolute;left:177.5px;top:74.5px" width="573.5" height="225.5" viewBox="177.5 74.5 573.5 225.5">
<defs>
<pattern id="mesh" width="2.4" height="2.4" patternUnits="userSpaceOnUse"><rect width="0.5" height="2.4" fill="#000" opacity="0.2"/><rect width="2.4" height="0.45" fill="#000" opacity="0.15"/></pattern>
<linearGradient id="fenceg" gradientUnits="userSpaceOnUse" x1="177" y1="0" x2="646" y2="0"><stop offset="0" stop-color="#ababab"/><stop offset="0.15" stop-color="#b3b3b3"/><stop offset="0.33" stop-color="#bdbdbd"/><stop offset="1" stop-color="#c0c0c0"/></linearGradient>
<pattern id="mesh2" width="1.8" height="1.8" patternUnits="userSpaceOnUse"><rect width="1.8" height="1.8" fill="#b0b0b0"/><rect width="0.5" height="1.8" fill="#9a9a9a"/><rect width="1.8" height="0.4" fill="#a6a6a6"/></pattern>
</defs>
<rect x="177" y="74" width="575" height="227" fill="#fff"/>
<!-- back fence -->
<rect x="177.5" y="74" width="469" height="46" fill="url(#fenceg)"/><rect x="177.5" y="74" width="469" height="46" fill="url(#mesh)"/>
<rect x="393" y="74" width="12" height="46" fill="#fff"/>
<rect x="474" y="74" width="13" height="46" fill="#fff"/>
<rect x="634" y="74" width="12" height="50" fill="#fff"/>
<rect x="311.5" y="74" width="15" height="46" fill="#fff"/>
<rect x="177.5" y="119" width="469" height="1.6" fill="#2e3312"/>
<rect x="177.5" y="120.6" width="469" height="1.6" fill="#b6c22c"/>
<rect x="238" y="74" width="1.3" height="46" fill="#2c2c14"/>
<rect x="559.5" y="74" width="1.3" height="46" fill="#2c2c14"/>
<rect x="404" y="74" width="71" height="45.5" fill="none" stroke="#222" stroke-width="0.9"/>
<!-- posts -->
<g fill="#2c2c14">
<rect x="311.5" y="74" width="1.2" height="48"/><rect x="326" y="74" width="1.2" height="48"/>
<rect x="393" y="74" width="1.2" height="48"/><rect x="405" y="74" width="1.2" height="48"/>
<rect x="474" y="74" width="1.2" height="48"/><rect x="486.5" y="74" width="1.2" height="48"/>
<rect x="634" y="74" width="1.2" height="48"/>
</g>
<g fill="#c8d43a" stroke="#8a9420" stroke-width="0.5">
<rect x="314" y="129" width="10.5" height="8"/>
<rect x="394" y="128.5" width="11" height="8.5"/>
<rect x="474.5" y="128.5" width="11" height="8.5"/>
<polygon points="633,134 640,129 648,134 640,138.5"/>
</g>
<g fill="#4a4a1c">
<rect x="317.5" y="74" width="5" height="58"/>
<rect x="397" y="74" width="4.5" height="58"/>
<rect x="477.5" y="74" width="4.5" height="58"/>
<rect x="638" y="74" width="5" height="58"/>
</g>
<!-- side fence -->
<polygon points="646.5,74 719,74 748,94 748,196 646.5,126.5" fill="url(#mesh2)"/>
<polygon points="719,74 722,74 748,91 748,95" fill="#d2dc48"/>
<polygon points="646.5,124.5 748,193.5 748,197 646.5,128" fill="#c8d43a"/>
<line x1="646.5" y1="74" x2="646.5" y2="127" stroke="#2c2c14" stroke-width="1.2"/>
<line x1="697.3" y1="74" x2="697.3" y2="162" stroke="#2c2c14" stroke-width="1"/>
<rect x="747.6" y="74" width="4" height="227" fill="#fff"/>
<line x1="748.6" y1="74" x2="748.6" y2="300" stroke="#d4d4d4" stroke-width="0.8"/>
<!-- LEFT ROBOT -->
<g id="robotL">
<!-- base octagon -->
<polygon points="191,207 208,191.5 285,191.5 305.3,209.5 305.3,247 273.5,270 223,270 191,247" fill="#56595d"/>
<polygon points="192,206 208,191.5 285,191.5 304,208 304,233 282,248 214,248 192,233" fill="#606367"/>
<polygon points="192,233 214,248 282,248 304,233 304,239.5 282,255.5 214,255.5 192,239.5" fill="#37393c"/>
<polygon points="224,253 272,253 272,261 224,261" fill="#1c1e20"/>
<rect x="235" y="242" width="28" height="1.2" fill="#2a2c2e"/>
<polygon points="191.5,179.7 213,178 222,174 242,157 258,153 272,141.6 275,132 307,130 302,160 292,182 283,191 283,213 279,224 261,231 191.5,231" fill="#9a4418"/>
<!-- orange left block -->
<polygon points="191.5,179.7 213,179 224,194 270,190 283,190.8 283,212.8 278.7,224 261,230.5 191.5,230.5" fill="#d96a28"/>
<polygon points="191.5,220 224,220 232,230.5 191.5,230.5" fill="#b85a22"/>
<polygon points="214,210.6 283,210 278.7,224 261,230.5 232,230.5 224,220" fill="#d06424"/>
<!-- dark under motor -->
<polygon points="219,199.6 278.7,190.8 283,206.2 270,213 236.8,212 221.3,205" fill="#5a2a0e"/>
<polygon points="238,206 262,203 266,212 246,214" fill="#3a1806"/>
<!-- bumps above motor -->
<polygon points="222,174 242.4,157 257.8,153.2 271.7,141.6 276,145.4 276.3,168.6 270.2,181 262.4,190 258.8,172 240,176" fill="#d4682a"/>
<polygon points="238,168 250,160 262,154 272,146 276,150 276,168 270,181 262,188 258,172 240,176" fill="#8a3c12"/><polygon points="250,164 262,157 270,150 274,156 270,172 262,178 256,170" fill="#4e2208"/>
<polygon points="255,166 262,164 263,168 256,170" fill="#e88040"/>
<!-- motor cylinder -->
<polygon points="215,178.6 258.8,170.9 262,188 219,201.8" fill="#d66a28"/>
<ellipse cx="216.5" cy="190.2" rx="4.5" ry="11.6" fill="#d06628"/>
<polygon points="217,195 260,184 262,189 219,201.8" fill="#a84c1a"/>
<line x1="222" y1="176" x2="259" y2="170" stroke="#5a2a0c" stroke-width="1"/>
<!-- lower arm -->
<polygon points="274.8,132 302.6,132 298,145.4 296.4,168.6 291.8,181 282.5,189 261,190 270.2,181 276.3,168.6 275.6,145.4" fill="#d86828"/>
<polygon points="277,137 300,137 295.5,150 294,168 289,180 280,186 265,188 272,179 278,168 277.5,148" fill="#4e2208"/>
<circle cx="282.5" cy="145.5" r="0.7" fill="#c88"/><circle cx="294" cy="146" r="0.7" fill="#c88"/><circle cx="279" cy="160" r="0.7" fill="#c88"/><circle cx="290" cy="161" r="0.7" fill="#c88"/>
<!-- elbow ring -->
<ellipse cx="289.4" cy="130" rx="17" ry="11.6" fill="#d96a28"/>
<path d="M272.4,130 Q273,141.6 289.4,141.6 Q300,141.6 304,136 Q290,140 280,134 Z" fill="#9a4418"/><ellipse cx="291" cy="127.1" rx="10" ry="6.5" fill="#3a1806"/>
<path d="M272.5,131 Q276,142 289,141.6 Q303,141 306.4,130" fill="none" stroke="#a84c1a" stroke-width="1.2"/>
<!-- shoulder ribs -->
<polygon points="274,105 306,104 305,119 300,122 280,122 276,118" fill="#dc6e2c"/>
<g stroke="#6a300e" stroke-width="1.4"><line x1="276.5" y1="108" x2="304.7" y2="108"/><line x1="276.5" y1="112.8" x2="304.7" y2="112.8"/><line x1="277" y1="117.4" x2="304" y2="117.4"/></g>
<!-- upper housing -->
<polygon points="268.3,77 271.6,74.5 278.2,74.5 279,78.6 298.1,79.5 298.9,84.4 309.7,86.1 308,103.5 269.9,105.2 266.6,96.9 266.6,85.3" fill="#da6c2a"/>
<polygon points="266.6,96 308.5,97 308,103.5 269.9,105.2" fill="#a04a1a"/><polygon points="266.6,85.3 270,84 272,104 269.9,105.2 266.6,96.9" fill="#a8501c"/><polygon points="276,76 279,78.6 298,79.5 299,84 276,84" fill="#e27a36"/>
<g fill="#6a2a0a"><rect x="276" y="87" width="2" height="1.5"/><rect x="280" y="91" width="1.5" height="1.5"/><rect x="292" y="90" width="1.5" height="1.5"/></g>
<!-- forearm -->
<polygon points="306,87 340,88 346,83.5 386,81.5 391,83 393,88 393,98 389,102.8 346,103 340,99.5 306,101" fill="#da6c2a"/>
<polygon points="306,96 340,96 346,98 393,97 389,102.8 346,103 340,99.5 306,101" fill="#a84c1c"/>
<polygon points="338,85 346,83.5 346,103 340,99.5" fill="#c05c22"/>
<polygon points="374,102 391,102 391,106 374,106" fill="#555a5c"/>
</g>
<!-- upper housing -->
<polygon points="267,76 276,74.5 280,78 300,80 306,84 307.5,104 300,107 280,108 268,106 266,92" fill="#d96a28"/>
<polygon points="268,97 306,97 306,104 300,107 280,108 268,106" fill="#b85420"/>
<!-- forearm -->
<polygon points="305,88 330,87 342,84.5 385,82 393,84 393,100 386,103 342,102 330,101 305,102" fill="#d96a28"/>
<polygon points="305,97 393,96 393,100 386,103 342,102 330,101 305,102" fill="#a84c1c"/>
<polygon points="372,100 390,100 390,106 374,106" fill="#4a4a4a"/>
</g>
<!-- RIGHT ROBOT -->
<g id="robotR">
<polygon points="579.9,213 596,193 680,193 693.6,210 693.6,246.2 659.4,269.6 613,269.6 579.9,246.2" fill="#56595d"/>
<polygon points="581.5,212 596,193 680,193 692,209 692,233 668,248 605,248 581.5,233" fill="#606367"/>
<polygon points="581.5,233 605,248 668,248 692,233 692,239.5 668,255.5 605,255.5 581.5,239.5" fill="#37393c"/>
<polygon points="616.3,254 656,254 656,262.5 616.3,262.5" fill="#1c1e20"/>
<rect x="621" y="238.5" width="29" height="1.2" fill="#25272a"/>
<rect x="600" y="200" width="5" height="24" fill="#8a9296"/>
<polygon points="589.7,161.6 595.8,116.7 622.7,116.7 618.9,142.1 628.6,143.4 665,149.4 673.5,153 673.5,176.1 692.9,181 692.9,233.5 623,233.5 603.1,227.5 600.6,198 592.1,178.6" fill="#9a4418"/>
<!-- body silhouette -->
<polygon points="589.7,161.6 592.1,178.6 600.6,198 603.1,227.5 623,233.5 692.5,233.5 692.9,181 673.5,176.1 673.5,153 665,149.4 628.6,143.4 618.9,142.1 617.6,130 595.8,130" fill="#d06424"/>
<polygon points="664.9,180 692.5,181 692.5,233 664.9,233" fill="#de7030"/>
<polygon points="670,180 692.5,181 692.5,233 670,233" fill="#e27634"/>
<polygon points="603.1,222 664,226 692.5,226 692.5,233.5 623,233.5" fill="#8a3c14"/>
<!-- upper arm vertical -->
<polygon points="596.9,116.7 622.7,116.7 619.7,143.5 617.8,157.4 592.9,157.4 593.9,143.5" fill="#d06628"/>
<polygon points="596.9,116.7 602,116.7 598,157.4 592.9,157.4" fill="#9a4618"/>
<rect x="602" y="128" width="8" height="1" fill="#8a3a10"/>
<!-- motor cylinder -->
<polygon points="628.6,146 673.5,153 673.5,176.1 631,178.6" fill="#d66a28"/>
<polygon points="631,172 673.5,170 673.5,176.1 631,178.6" fill="#b05220"/>
<!-- dark regions -->
<polygon points="600.4,198 626,196 640,188 664,186 665.3,222 640,233 603,228" fill="#d46826"/>
<polygon points="630.4,193 639,193 638,222 635,227 632,222" fill="#4a2206"/>
<polygon points="626,186 642,186 640,194 628,194" fill="#6a2e0c"/>
<path d="M604,210 Q630,222 663,212" fill="none" stroke="#6a2e0c" stroke-width="1.2"/>
<path d="M606,200 Q620,196 628,190" fill="none" stroke="#7a3410" stroke-width="1"/>
<polygon points="663,181 669,181.5 669,226 663,226" fill="#b85420"/>
<polygon points="612,228 662,228 692.5,227 692.5,233.5 623,236" fill="#6a2e0c"/>
<polygon points="628.2,173 674.6,170 674.6,176 664,180 630,181" fill="#7a3410"/>
<polygon points="641,190 660,188 661,194 642,196" fill="#8a3c12"/>
<!-- shoulder joint ring -->
<ellipse cx="609.5" cy="171" rx="19.8" ry="14" fill="#c45c22" stroke="#7a3410" stroke-width="1"/>
<ellipse cx="608.5" cy="172" rx="13" ry="9" fill="#d86a28"/>
<polygon points="599.5,174 622,174 625.4,185 622,199.4 601,199.4 598,188" fill="#a84c1a"/>
<polygon points="601,184 621,184 621,199.4 601,199.4" fill="#4e2208"/>
<ellipse cx="610" cy="175" rx="10" ry="3.4" fill="#e07634"/>
<!-- forearm + housing -->
<polygon points="507.7,102.8 526.6,97.2 555.3,95 580,92.9 588,86.9 605.8,82 615.8,79 625.7,82 631.7,91.9 630.7,103.8 626.7,113.7 621.7,116.7 595.9,116.7 595.9,109.8 588.5,105 580,103.8 559.8,110.5 539.8,116 522,120.5 508.9,115 505,108" fill="#d96a28"/>
<polygon points="508.9,113 540,112.5 559.8,107 580,101 588.5,103 580,103.8 559.8,110.5 539.8,116 522,120.5" fill="#a84c1c"/>
<polygon points="595.9,103 630.7,103.8 626.7,113.7 621.7,116.7 595.9,116.7" fill="#b85420"/>
<polygon points="588,86.9 605.8,82 606,100 590,103" fill="#d0662a"/>
<g fill="#6a2a0a"><rect x="521" y="104" width="3" height="1"/><rect x="604" y="90" width="1.5" height="1.5"/><rect x="612" y="95" width="1.5" height="1.5"/></g>
</g>
<!-- LEFT GUN -->
<g id="gunL">
<rect x="375.1" y="104" width="15" height="14.2" fill="#a4a8aa"/>
<g fill="#2a2c2e"><rect x="375.1" y="104" width="15" height="1.6"/><rect x="375.1" y="107.6" width="15" height="1"/><rect x="375.1" y="111" width="15" height="1"/><rect x="375.1" y="114.4" width="15" height="1"/><rect x="375.1" y="117.4" width="15" height="0.8"/></g>
<rect x="374.5" y="118.2" width="14.8" height="37" fill="#7a7e80"/>
<rect x="377.3" y="119.5" width="9.4" height="17" fill="#d4d8d4"/>
<rect x="378.6" y="119.5" width="1" height="17" fill="#555"/><rect x="384.4" y="119.5" width="1" height="17" fill="#555"/>
<rect x="380" y="126" width="4" height="7" fill="#5a8a50"/>
<rect x="374.5" y="137" width="14.8" height="18" fill="#5c6062"/>
<rect x="376" y="140" width="3" height="12" fill="#8a8e90"/>
<polygon points="357.7,124 364,121.6 376.3,122 376.3,146 366,148 358,141" fill="#1e3c98"/>
<polygon points="360,124 372,122.5 373,131 362,132" fill="#4a86b4"/>
<polygon points="358,138 376.3,138 376.3,146 366,148" fill="#16307a"/>
<path d="M372,145.5 C364,146 361,153 364,158 C366,162 372,162 381,161" fill="none" stroke="#d86a28" stroke-width="2.2"/>
<rect x="379.7" y="141.3" width="4.6" height="42" rx="2.2" fill="#d86a28"/>
<rect x="381.2" y="141.3" width="1.3" height="42" fill="#a84818"/>
</g>
<rect x="375.1" y="118.2" width="14" height="37" fill="#8a8e90"/>
<rect x="378" y="121" width="8" height="14" fill="#c8ccc8"/>
<rect x="379.5" y="124" width="4.5" height="8" fill="#5a7a50"/>
<rect x="375.1" y="138" width="14" height="17" fill="#5c6062"/>
<polygon points="357.7,123 372,121.6 376.3,126 376,144.8 360,144 357.7,136" fill="#2244a0"/>
<polygon points="360,126 370,124 372,132 362,135" fill="#3a78a8"/>
<path d="M370,144 C362,146 360,158 368,162 L382,161" fill="none" stroke="#d86a28" stroke-width="2"/>
<rect x="379.7" y="141.3" width="4.5" height="42" rx="2" fill="#d86a28"/>
<rect x="381" y="141.3" width="1.3" height="42" fill="#a84818"/>
</g>
<!-- RIGHT GUN -->
<g id="gunR">
<polygon points="506,110 519,112 523,121 509,121" fill="#c85e22"/><polygon points="508.9,120 522.3,123.6 506.5,172.8 494.3,167.9" fill="#7a7e80"/><polygon points="508.9,120 522.3,123.6 520.6,128.6 507.4,125" fill="#2e3234"/>
<polygon points="510,126 518,128 514,140 506,138" fill="#e8ece8"/>
<polygon points="506,140 514,142 508,160 500,158" fill="#9aa098"/>
<polygon points="502,150 507,151 505,157 500,156" fill="#4a7a40"/>
<polygon points="483.4,138.8 502.8,135.1 500,160.6 484.6,163.1 481,150" fill="#2244a0"/>
<polygon points="486,141 498,139 497,150 486,152" fill="#3a78a8"/>
<path d="M484,167 C484,175 492,176 498,174" fill="none" stroke="#d86a28" stroke-width="2"/>
<polygon points="500,165 503.5,166 494.6,197.5 491.5,196.5" fill="#d86a28"/>
</g>
<!-- TABLE -->
<rect x="375.9" y="224" width="136.5" height="76" fill="#3d6a34"/>
<rect x="375.9" y="224" width="136.5" height="1.2" fill="#5a8a4a"/>
<rect x="378.8" y="228.9" width="130.6" height="24.4" rx="3" fill="#58595d"/>
<rect x="378.8" y="250.5" width="130.6" height="3" rx="1.5" fill="#222"/>
<ellipse cx="444.8" cy="263.5" rx="12" ry="8.5" fill="#8b3d1c"/>
<rect x="444.3" y="258.5" width="1" height="5" fill="#f0d0c0"/>
<!-- fixture legs -->
<g fill="#26282c">
<rect x="391.5" y="215" width="1.9" height="23.5"/><rect x="410" y="215" width="1.4" height="18.6"/><rect x="416" y="215" width="1.2" height="18.6"/>
<rect x="428.6" y="215" width="1.6" height="33.2"/><rect x="457.9" y="215" width="1.6" height="33.2"/>
<rect x="471.6" y="215" width="1.4" height="18.6"/><rect x="477.4" y="215" width="1.2" height="18.6"/><rect x="495.5" y="215" width="2" height="23.5"/>
<rect x="400.3" y="241.4" width="5.8" height="9.8"/><rect x="483.3" y="241.4" width="5.8" height="9.8"/>
</g>
<g fill="#3a6a98">
<rect x="402.3" y="220" width="1.5" height="20"/><rect x="484.8" y="220" width="1.5" height="20"/><rect x="497" y="208" width="3" height="7"/><rect x="389" y="208" width="2" height="5"/></g>
<g fill="#1e3a5a"><rect x="412.8" y="186" width="1.3" height="5"/><rect x="474.9" y="186" width="1.3" height="5"/></g>
<!-- part -->
<path d="M387.6,199.4 Q442,189.5 495,199.4 L497,204 L495.5,220 L389.5,220 L386.5,204 Z" fill="#b2b2a8"/>
<path d="M392,214 Q442,206 492,214 L495.5,220 L389.5,220 Z" fill="#c4c4bc"/>
<path d="M389.5,219 H495.5 V221.5 H389.5 Z" fill="#6a6a66"/>
<path d="M408,208 q5,-4 10,0 l-1,3 q-4,-2 -8,0 z M467,208 q5,-4 10,0 l-1,3 q-4,-2 -8,0 z" fill="#7a7a74"/>
<rect x="441.5" y="199.5" width="0.9" height="5" fill="#f4f4f0"/>
<circle cx="412.8" cy="206.5" r="2" fill="none" stroke="#444" stroke-width="0.6"/>
<circle cx="474.9" cy="206.5" r="2" fill="none" stroke="#444" stroke-width="0.6"/>
<g fill="#3a6a98"><rect x="412.5" y="178" width="1.9" height="27"/><rect x="474.6" y="178" width="1.9" height="27"/></g>
<g fill="#1e3a5a"><rect x="412.8" y="186" width="1.3" height="5"/><rect x="474.9" y="186" width="1.3" height="5"/></g>
<!-- triangles -->
<polygon points="307.8,219.5 323,230 307.8,240" fill="#1f5a80"/>
<polygon points="561.2,229.5 576.8,221.2 576.8,239.5" fill="#1f5a80"/>
<!-- timeline bar -->
<rect x="242" y="276.6" width="441" height="5.6" rx="2.8" fill="#a6d0de"/>
<rect x="244" y="278.6" width="429" height="1.6" fill="#f4fafc"/>
<rect x="673.5" y="276.6" width="9.5" height="5.6" rx="2.8" fill="#6aa2ba"/>
<!-- bottom overlay box -->
<rect x="242" y="281.8" width="441" height="2.4" fill="#fff" opacity="0.35"/>
<path d="M386,284.5 H512.5 V293.5 H389 Q386,293.5 386,290.5 Z" fill="#fff"/>
<rect x="389.5" y="286.6" width="5" height="4.6" fill="none" stroke="#6a8aaa" stroke-width="0.6"/><rect x="389.5" y="286.6" width="5" height="1.2" fill="#6a8aaa"/>
<text x="396.9" y="291.2" font-family="Liberation Sans" font-size="4.95" fill="#3a76b0">Spotweld Station_[2025-05-07_22:19:24]</text>
<path d="M488.8,288.3 l1.4,1.4 l1.4,-1.4" fill="none" stroke="#555" stroke-width="0.6"/>
<path d="M499,287 v4.4 M503.2,287 l-2.2,2.2 l2.2,2.2 z M501,287 l-2,2.2 l2,2.2" stroke="#7a8a9a" stroke-width="0.5" fill="#7a8a9a"/>
<rect x="507.2" y="287" width="1.3" height="4.5" fill="#3a7ab0"/><rect x="509.4" y="287" width="1.3" height="4.5" fill="#3a7ab0"/>
<text x="526.5" y="291.2" font-family="Liberation Sans" font-size="5" fill="#4a8ab8">0.95</text>
<!-- axis widget -->
<line x1="194.8" y1="246" x2="194.8" y2="268.5" stroke="#4a5ac8" stroke-width="0.9"/>
<line x1="194.8" y1="268.5" x2="194.8" y2="289" stroke="#d84a4a" stroke-width="0.9"/>
<line x1="194.8" y1="268.5" x2="223.7" y2="268.5" stroke="#5ab85a" stroke-width="0.9"/>
<rect x="196" y="254" width="22.4" height="15.5" fill="#fff" opacity="0.6"/><rect x="196" y="254" width="22.4" height="15.5" fill="none" stroke="#bbb" stroke-width="0.4"/><rect x="204.5" y="260.5" width="2.6" height="2.2" fill="#222"/><rect x="205.5" y="258.3" width="0.6" height="2" fill="#555"/><circle cx="194.8" cy="250" r="1.1" fill="#3040c0"/><circle cx="194.8" cy="285" r="1.1" fill="#d02020"/><path d="M193.3,287 l3,3 M196.3,287 l-3,3" stroke="#d84a4a" stroke-width="0.5"/>
<rect x="196" y="269.5" width="22.4" height="14" rx="1.5" fill="#d2d2d2"/>
<text x="201" y="278.5" font-family="Liberation Sans" font-size="4" fill="#333">Right</text>
<!-- top overlay toolbar -->
<rect x="358" y="79" width="210.5" height="14.3" rx="2" fill="#fff" opacity="0.5"/>
<g fill="none" stroke="#888" stroke-width="0.6" opacity="0.8">
<circle cx="364.5" cy="85" r="2.6" stroke="#c87040"/><path d="M366.5,87 l2,2" stroke="#c87040"/>
<circle cx="376" cy="85" r="2.6"/><path d="M378,87 l2,2"/>
<circle cx="388" cy="86" r="2.5"/><circle cx="403" cy="86" r="2.5" stroke="#c87040"/>
<path d="M421,89 l1.5,1 M438,84 l3,3 M447,82 l4,6" />
<path d="M491,83 v6 M499,84 a3,3 0 1 1 0.1,0 M514,85 a3,3 0 1 1 0.1,0 M527,84 h8 M527,89 h8"/>
</g>
<ellipse cx="418" cy="86.5" rx="3.5" ry="2.5" fill="#bbb"/>
<path d="M432,82 l0,5 l1.5,-1.2 l1.2,2 l0.8,-0.4 l-1.1,-2 l2,0 z" fill="#444"/>
<path d="M452,85 l0,5 l1.5,-1.2 l1.2,2 l0.8,-0.4 l-1.1,-2 l2,0 z" fill="#444"/>
<path d="M479,84 l0,5 l1.5,-1.2 l1.2,2 l0.8,-0.4 l-1.1,-2 l2,0 z" fill="#555"/>
<polygon points="466.4,90.5 470,84 473.6,90.5" fill="#e89050"/>
<rect x="553" y="82.5" width="6" height="3" rx="1" fill="#e8a080" opacity="0.8"/>
</svg>

<!-- SEQUENCE EDITOR -->
<div style="left:177px;top:300px;width:574px;height:7.5px;background:#0d6482"></div>
<div class="t" style="left:178.5px;top:301px;color:#d4e6ee;font-size:4.7px">Sequence Editor</div>
<svg style="left:730px;top:303px;position:absolute;overflow:visible" width="3" height="2" viewBox="0 0 3 2"><polygon points="0,0 3,0 1.5,2" fill="#e6f0f4"/></svg>
<svg style="left:736.5px;top:301.5px;position:absolute;overflow:visible" width="4" height="5" viewBox="0 0 4 5"><rect x="0.9" y="0" width="2.2" height="2.8" rx="0.6" fill="#e6f0f4"/><rect x="0.3" y="2.6" width="3.4" height="0.6" fill="#e6f0f4"/><rect x="1.7" y="3" width="0.6" height="1.8" fill="#e6f0f4"/></svg>
<svg style="left:744.2px;top:302.3px;position:absolute;overflow:visible" width="2.6" height="2.6" viewBox="0 0 2.6 2.6"><path d="M0,0 L2.6,2.6 M2.6,0 L0,2.6" stroke="#e6f0f4" stroke-width="0.7"/></svg>
<svg style="left:177px;top:307.5px;position:absolute" width="574" height="10" viewBox="177 307.5 574 10"><rect x="180" y="311" width="5" height="3" rx="1.5" fill="none" stroke="#555" stroke-width="0.6" stroke="#aaa"/><path d="M188.5,313 h2 M190,311.5 a1.5,1.5 0 1 1 0,3" fill="none" stroke="#555" stroke-width="0.6"/><circle cx="192.5" cy="313.3" r="1.2" fill="none" stroke="#555" stroke-width="0.6"/><circle cx="199.4" cy="312.2" r="2.4" fill="#e8c890" stroke="#555" stroke-width="0.6"/><line x1="201.1" y1="313.9" x2="202.4" y2="315.5" stroke="#444" stroke-width="0.8"/><circle cx="207.8" cy="312.2" r="2.4" fill="#f0e8d0" stroke="#555" stroke-width="0.6"/><line x1="209.5" y1="313.9" x2="210.8" y2="315.5" stroke="#444" stroke-width="0.8"/><circle cx="216.6" cy="312.2" r="2.4" fill="#f0e0b0" stroke="#555" stroke-width="0.6"/><line x1="218.29999999999998" y1="313.9" x2="219.6" y2="315.5" stroke="#444" stroke-width="0.8"/><circle cx="225.5" cy="312.2" r="2.4" fill="#e8b0c8" stroke="#555" stroke-width="0.6"/><line x1="227.2" y1="313.9" x2="228.5" y2="315.5" stroke="#444" stroke-width="0.8"/><rect x="231.5" y="310.5" width="5.5" height="4.5" fill="#888"/><rect x="232.5" y="311.5" width="1.5" height="1.5" fill="#fff"/><rect x="234.8" y="310" width="1.6" height="2" fill="#d8a030"/><rect x="240" y="309" width="0.6" height="7" fill="#ccc"/><path d="M243.5,310.6 v4.4 M244.5,312.8 l2,-2.2 v4.4 z M246.5,312.8 l2,-2.2 v4.4 z M248.6,310.6 v4.4" stroke="#444" stroke-width="0.6" fill="#444"/><path d="M252.5,310.6 v4.4 M253.2,312.8 l2.5,-2.2 v4.4 z" stroke="#aaa" stroke-width="0.6" fill="#aaa"/><path d="M261,312.8 l2.6,-2.4 v4.8 z" fill="#444"/><rect x="263.8" y="310.4" width="0.8" height="4.8" fill="#444"/><path d="M271,312.8 l2.6,-2.2 v4.4 z" fill="#555"/><rect x="278.8" y="310.3" width="3.8" height="5" fill="#333"/><path d="M288.5,310.6 l2.6,2.2 l-2.6,2.2 z" fill="#333"/><path d="M297,310.6 l2.4,2.2 l-2.4,2.2 z" fill="#aaa"/><rect x="299.6" y="310.6" width="0.6" height="4.4" fill="#aaa"/><path d="M305.5,310.6 l2.4,2.2 l-2.4,2.2 z" fill="#555"/><rect x="308" y="310.6" width="0.6" height="4.4" fill="#555"/><path d="M313,310.6 l2,2.2 l-2,2.2 z M315,310.6 l2,2.2 l-2,2.2 z" fill="#444"/><rect x="312.3" y="310.6" width="0.6" height="4.4" fill="#444"/><rect x="317.2" y="310.6" width="0.6" height="4.4" fill="#444"/><rect x="320.6" y="309" width="0.6" height="7" fill="#ccc"/><rect x="359" y="312.5" width="3" height="0.7" fill="#444"/><rect x="367" y="312.7" width="62" height="0.5" fill="#bbb"/><rect x="397.3" y="310.5" width="1.6" height="4.3" fill="#fff" stroke="#aaa" stroke-width="0.4"/><path d="M434.3,312.8 h3.6 M436.1,311 v3.6" stroke="#333" stroke-width="0.8"/><rect x="440.2" y="309" width="0.6" height="7" fill="#ccc"/><rect x="459" y="309" width="0.6" height="7" fill="#ccc"/><rect x="461.5" y="310.5" width="4.5" height="4.5" rx="0.6" fill="none" stroke="#666" stroke-width="0.6"/><path d="M470,312.6 h2" stroke="#666" stroke-width="0.6"/><rect x="477" y="311" width="3.5" height="3.5" fill="none" stroke="#555" stroke-width="0.6"/><rect x="478" y="309.7" width="1.5" height="1" fill="#555"/><circle cx="485" cy="312.5" r="2.3" fill="none" stroke="#555" stroke-width="0.6"/><path d="M484,314 l1,1 l1.5,-2" stroke="#3a8" stroke-width="0.5" fill="none"/><path d="M491,314.8 v-2.5 a2,2 0 0 1 4,0 v2.5 z" fill="none" stroke="#555" stroke-width="0.6"/></svg>
<div class="t" style="left:346.3px;top:310.2px;font-size:4.2px;color:#555;">0.90</div>
<div class="t" style="left:443.5px;top:310.2px;font-size:4.2px;color:#666;">0.05</div>
<div style="left:456.2px;top:310.8px;width:0.7px;height:0.7px;background:#666;"></div>
<div style="left:456.2px;top:312.4px;width:0.7px;height:0.7px;background:#666;"></div>
<div style="left:456.2px;top:314px;width:0.7px;height:0.7px;background:#666;"></div>
<div style="left:177px;top:317.4px;width:137.5px;height:5.6px;background:#fff;border-top:0.8px solid #d0d0d0;border-bottom:0.6px solid #e0e0e0"></div>
<div class="t" style="left:180.2px;top:318.2px;font-size:4.2px;color:#666;">Sequence Editor</div>
<div style="left:314.3px;top:317.4px;width:0.8px;height:95px;background:#cfcfcf;"></div>
<div style="left:177px;top:330.2px;width:137.5px;height:0.6px;background:#e8e8e8;"></div>
<div style="left:177px;top:336.4px;width:137.5px;height:0.6px;background:#e8e8e8;"></div>
<div style="left:177px;top:342.2px;width:137.5px;height:0.6px;background:#e8e8e8;"></div>
<div style="left:180px;top:325.5px;width:3px;height:3px;background:#fff;border:0.4px solid #bbb"></div>
<div style="left:186.3px;top:323.6px;width:5px;height:5px;background:#902090;clip-path:polygon(50% 0,100% 100%,0 100%)"></div>
<div style="left:193.3px;top:324px;width:75.5px;height:5.8px;background:#c6c6c6;"></div>
<div class="t" style="left:194px;top:324.4px;font-size:4.2px;color:#333;">Spotweld Station_[2025-05-07_22:19:24]</div>
<div style="left:188.5px;top:329px;width:0.5px;height:10.6px;background:#666;"></div>
<div style="left:188.5px;top:333px;width:5px;height:0.5px;background:#777;"></div>
<div style="left:188.5px;top:339.2px;width:5px;height:0.5px;background:#777;"></div>
<div style="left:193.7px;top:330.9px;width:2.8px;height:2.8px;background:#c020c0;"></div>
<div style="left:195.8px;top:332.8px;width:2.8px;height:2.6px;background:#3040b0;"></div>
<div class="t" style="left:201px;top:331.3px;font-size:4.3px;color:#444;">R3_WELD</div>
<div style="left:193.7px;top:337.09999999999997px;width:2.8px;height:2.8px;background:#c020c0;"></div>
<div style="left:195.8px;top:339.0px;width:2.8px;height:2.6px;background:#3040b0;"></div>
<div class="t" style="left:201px;top:337.5px;font-size:4.3px;color:#444;">R2_WELD</div>
<svg style="left:315px;top:317px;position:absolute" width="436" height="28" viewBox="315 317 436 28"><rect x="315" y="317.4" width="436" height="5.6" fill="#fff"/><rect x="315" y="317.4" width="436" height="0.7" fill="#c8c8c8"/><rect x="315" y="322.8" width="436" height="0.6" fill="#d0d0d0"/><rect x="315.20" y="322.8" width="0.6" height="19.6" fill="#dcdcdc"/><rect x="315.20" y="321" width="0.6" height="1.8" fill="#888"/><rect x="321.99" y="322" width="0.5" height="0.9" fill="#999"/><text x="316.20" y="321.4" text-anchor="middle" font-family="Liberation Sans" font-size="3.8" fill="#555">0</text><rect x="328.78" y="322.8" width="0.6" height="19.6" fill="#dcdcdc"/><rect x="328.78" y="321" width="0.6" height="1.8" fill="#888"/><rect x="335.57" y="322" width="0.5" height="0.9" fill="#999"/><text x="329.78" y="321.4" text-anchor="middle" font-family="Liberation Sans" font-size="3.8" fill="#555">0.5</text><rect x="342.36" y="322.8" width="0.6" height="19.6" fill="#dcdcdc"/><rect x="342.36" y="321" width="0.6" height="1.8" fill="#888"/><rect x="349.15" y="322" width="0.5" height="0.9" fill="#999"/><text x="343.36" y="321.4" text-anchor="middle" font-family="Liberation Sans" font-size="3.8" fill="#555">1.0</text><rect x="355.94" y="322.8" width="0.6" height="19.6" fill="#dcdcdc"/><rect x="355.94" y="321" width="0.6" height="1.8" fill="#888"/><rect x="362.73" y="322" width="0.5" height="0.9" fill="#999"/><text x="356.94" y="321.4" text-anchor="middle" font-family="Liberation Sans" font-size="3.8" fill="#555">1.5</text><rect x="369.52" y="322.8" width="0.6" height="19.6" fill="#dcdcdc"/><rect x="369.52" y="321" width="0.6" height="1.8" fill="#888"/><rect x="376.31" y="322" width="0.5" height="0.9" fill="#999"/><text x="370.52" y="321.4" text-anchor="middle" font-family="Liberation Sans" font-size="3.8" fill="#555">2.0</text><rect x="383.10" y="322.8" width="0.6" height="19.6" fill="#dcdcdc"/><rect x="383.10" y="321" width="0.6" height="1.8" fill="#888"/><rect x="389.89" y="322" width="0.5" height="0.9" fill="#999"/><text x="384.10" y="321.4" text-anchor="middle" font-family="Liberation Sans" font-size="3.8" fill="#555">2.5</text><rect x="396.68" y="322.8" width="0.6" height="19.6" fill="#dcdcdc"/><rect x="396.68" y="321" width="0.6" height="1.8" fill="#888"/><rect x="403.47" y="322" width="0.5" height="0.9" fill="#999"/><text x="397.68" y="321.4" text-anchor="middle" font-family="Liberation Sans" font-size="3.8" fill="#555">3.0</text><rect x="410.26" y="322.8" width="0.6" height="19.6" fill="#dcdcdc"/><rect x="410.26" y="321" width="0.6" height="1.8" fill="#888"/><rect x="417.05" y="322" width="0.5" height="0.9" fill="#999"/><text x="411.26" y="321.4" text-anchor="middle" font-family="Liberation Sans" font-size="3.8" fill="#555">3.5</text><rect x="423.84" y="322.8" width="0.6" height="19.6" fill="#dcdcdc"/><rect x="423.84" y="321" width="0.6" height="1.8" fill="#888"/><rect x="430.63" y="322" width="0.5" height="0.9" fill="#999"/><text x="424.84" y="321.4" text-anchor="middle" font-family="Liberation Sans" font-size="3.8" fill="#555">4.0</text><rect x="437.42" y="322.8" width="0.6" height="19.6" fill="#dcdcdc"/><rect x="437.42" y="321" width="0.6" height="1.8" fill="#888"/><rect x="444.21" y="322" width="0.5" height="0.9" fill="#999"/><text x="438.42" y="321.4" text-anchor="middle" font-family="Liberation Sans" font-size="3.8" fill="#555">4.5</text><rect x="451.00" y="322.8" width="0.6" height="19.6" fill="#dcdcdc"/><rect x="451.00" y="321" width="0.6" height="1.8" fill="#888"/><rect x="457.79" y="322" width="0.5" height="0.9" fill="#999"/><text x="452.00" y="321.4" text-anchor="middle" font-family="Liberation Sans" font-size="3.8" fill="#555">5.0</text><rect x="464.58" y="322.8" width="0.6" height="19.6" fill="#dcdcdc"/><rect x="464.58" y="321" width="0.6" height="1.8" fill="#888"/><rect x="471.37" y="322" width="0.5" height="0.9" fill="#999"/><text x="465.58" y="321.4" text-anchor="middle" font-family="Liberation Sans" font-size="3.8" fill="#555">5.5</text><rect x="478.16" y="322.8" width="0.6" height="19.6" fill="#dcdcdc"/><rect x="478.16" y="321" width="0.6" height="1.8" fill="#888"/><rect x="484.95" y="322" width="0.5" height="0.9" fill="#999"/><text x="479.16" y="321.4" text-anchor="middle" font-family="Liberation Sans" font-size="3.8" fill="#555">6.0</text><rect x="491.74" y="322.8" width="0.6" height="19.6" fill="#dcdcdc"/><rect x="491.74" y="321" width="0.6" height="1.8" fill="#888"/><rect x="498.53" y="322" width="0.5" height="0.9" fill="#999"/><text x="492.74" y="321.4" text-anchor="middle" font-family="Liberation Sans" font-size="3.8" fill="#555">6.5</text><rect x="505.32" y="322.8" width="0.6" height="19.6" fill="#dcdcdc"/><rect x="505.32" y="321" width="0.6" height="1.8" fill="#888"/><rect x="512.11" y="322" width="0.5" height="0.9" fill="#999"/><text x="506.32" y="321.4" text-anchor="middle" font-family="Liberation Sans" font-size="3.8" fill="#555">7.0</text><rect x="518.90" y="322.8" width="0.6" height="19.6" fill="#dcdcdc"/><rect x="518.90" y="321" width="0.6" height="1.8" fill="#888"/><rect x="525.69" y="322" width="0.5" height="0.9" fill="#999"/><text x="519.90" y="321.4" text-anchor="middle" font-family="Liberation Sans" font-size="3.8" fill="#555">7.5</text><rect x="532.48" y="322.8" width="0.6" height="19.6" fill="#dcdcdc"/><rect x="532.48" y="321" width="0.6" height="1.8" fill="#888"/><rect x="539.27" y="322" width="0.5" height="0.9" fill="#999"/><text x="533.48" y="321.4" text-anchor="middle" font-family="Liberation Sans" font-size="3.8" fill="#555">8.0</text><rect x="546.06" y="322.8" width="0.6" height="19.6" fill="#dcdcdc"/><rect x="546.06" y="321" width="0.6" height="1.8" fill="#888"/><rect x="552.85" y="322" width="0.5" height="0.9" fill="#999"/><text x="547.06" y="321.4" text-anchor="middle" font-family="Liberation Sans" font-size="3.8" fill="#555">8.5</text><rect x="559.64" y="322.8" width="0.6" height="19.6" fill="#dcdcdc"/><rect x="559.64" y="321" width="0.6" height="1.8" fill="#888"/><rect x="566.43" y="322" width="0.5" height="0.9" fill="#999"/><text x="560.64" y="321.4" text-anchor="middle" font-family="Liberation Sans" font-size="3.8" fill="#555">9.0</text><rect x="573.22" y="322.8" width="0.6" height="19.6" fill="#dcdcdc"/><rect x="573.22" y="321" width="0.6" height="1.8" fill="#888"/><rect x="580.01" y="322" width="0.5" height="0.9" fill="#999"/><text x="574.22" y="321.4" text-anchor="middle" font-family="Liberation Sans" font-size="3.8" fill="#555">9.5</text><rect x="586.80" y="322.8" width="0.6" height="19.6" fill="#dcdcdc"/><rect x="586.80" y="321" width="0.6" height="1.8" fill="#888"/><rect x="593.59" y="322" width="0.5" height="0.9" fill="#999"/><text x="587.80" y="321.4" text-anchor="middle" font-family="Liberation Sans" font-size="3.8" fill="#555">10.0</text><rect x="600.38" y="322.8" width="0.6" height="19.6" fill="#dcdcdc"/><rect x="600.38" y="321" width="0.6" height="1.8" fill="#888"/><rect x="607.17" y="322" width="0.5" height="0.9" fill="#999"/><text x="601.38" y="321.4" text-anchor="middle" font-family="Liberation Sans" font-size="3.8" fill="#555">10.5</text><rect x="613.96" y="322.8" width="0.6" height="19.6" fill="#dcdcdc"/><rect x="613.96" y="321" width="0.6" height="1.8" fill="#888"/><rect x="620.75" y="322" width="0.5" height="0.9" fill="#999"/><text x="614.96" y="321.4" text-anchor="middle" font-family="Liberation Sans" font-size="3.8" fill="#555">11.0</text><rect x="627.54" y="322.8" width="0.6" height="19.6" fill="#dcdcdc"/><rect x="627.54" y="321" width="0.6" height="1.8" fill="#888"/><rect x="634.33" y="322" width="0.5" height="0.9" fill="#999"/><text x="628.54" y="321.4" text-anchor="middle" font-family="Liberation Sans" font-size="3.8" fill="#555">11.5</text><rect x="641.12" y="322.8" width="0.6" height="19.6" fill="#dcdcdc"/><rect x="641.12" y="321" width="0.6" height="1.8" fill="#888"/><rect x="647.91" y="322" width="0.5" height="0.9" fill="#999"/><text x="642.12" y="321.4" text-anchor="middle" font-family="Liberation Sans" font-size="3.8" fill="#555">12.0</text><rect x="654.70" y="322.8" width="0.6" height="19.6" fill="#dcdcdc"/><rect x="654.70" y="321" width="0.6" height="1.8" fill="#888"/><rect x="661.49" y="322" width="0.5" height="0.9" fill="#999"/><text x="655.70" y="321.4" text-anchor="middle" font-family="Liberation Sans" font-size="3.8" fill="#555">12.5</text><rect x="668.28" y="322.8" width="0.6" height="19.6" fill="#dcdcdc"/><rect x="668.28" y="321" width="0.6" height="1.8" fill="#888"/><rect x="675.07" y="322" width="0.5" height="0.9" fill="#999"/><text x="669.28" y="321.4" text-anchor="middle" font-family="Liberation Sans" font-size="3.8" fill="#555">13.0</text><rect x="681.86" y="322.8" width="0.6" height="19.6" fill="#dcdcdc"/><rect x="681.86" y="321" width="0.6" height="1.8" fill="#888"/><rect x="688.65" y="322" width="0.5" height="0.9" fill="#999"/><text x="682.86" y="321.4" text-anchor="middle" font-family="Liberation Sans" font-size="3.8" fill="#555">13.5</text><rect x="695.44" y="322.8" width="0.6" height="19.6" fill="#dcdcdc"/><rect x="695.44" y="321" width="0.6" height="1.8" fill="#888"/><rect x="702.23" y="322" width="0.5" height="0.9" fill="#999"/><text x="696.44" y="321.4" text-anchor="middle" font-family="Liberation Sans" font-size="3.8" fill="#555">14.0</text><rect x="709.02" y="322.8" width="0.6" height="19.6" fill="#dcdcdc"/><rect x="709.02" y="321" width="0.6" height="1.8" fill="#888"/><rect x="715.81" y="322" width="0.5" height="0.9" fill="#999"/><text x="710.02" y="321.4" text-anchor="middle" font-family="Liberation Sans" font-size="3.8" fill="#555">14.5</text><rect x="722.60" y="322.8" width="0.6" height="19.6" fill="#dcdcdc"/><rect x="722.60" y="321" width="0.6" height="1.8" fill="#888"/><rect x="729.39" y="322" width="0.5" height="0.9" fill="#999"/><text x="723.60" y="321.4" text-anchor="middle" font-family="Liberation Sans" font-size="3.8" fill="#555">15.0</text><rect x="736.18" y="322.8" width="0.6" height="19.6" fill="#dcdcdc"/><rect x="736.18" y="321" width="0.6" height="1.8" fill="#888"/><rect x="742.97" y="322" width="0.5" height="0.9" fill="#999"/><text x="737.18" y="321.4" text-anchor="middle" font-family="Liberation Sans" font-size="3.8" fill="#555">15.5</text><rect x="749.76" y="322.8" width="0.6" height="19.6" fill="#dcdcdc"/><rect x="749.76" y="321" width="0.6" height="1.8" fill="#888"/><text x="750.76" y="321.4" text-anchor="middle" font-family="Liberation Sans" font-size="3.8" fill="#555">16.0</text><rect x="315" y="330.2" width="436" height="0.5" fill="#e6e6e6"/><rect x="315" y="336.4" width="436" height="0.5" fill="#e6e6e6"/><rect x="315" y="342.2" width="436" height="0.9" fill="#c4c4c4"/><rect x="339.5" y="323.5" width="0.7" height="18.7" fill="#b84050"/><rect x="315.8" y="324.5" width="0.8" height="4" fill="#6a8ac8"/><rect x="315.8" y="331" width="0.8" height="4" fill="#6a8ac8"/><rect x="315.8" y="337.2" width="0.8" height="4" fill="#6a8ac8"/></svg>
<div style="left:177px;top:406px;width:137px;height:6.3px;background:#efefef;"></div>
<svg style="left:179px;top:407.6px;position:absolute;overflow:visible" width="2" height="3.2" viewBox="0 0 2 3.2"><polygon points="2,0 0,1.6 2,3.2" fill="#444"/></svg>
<div style="left:309.5px;top:406.3px;width:4.8px;height:5.8px;background:#fff;border:0.5px solid #bbb"></div>
<svg style="left:311px;top:407.6px;position:absolute;overflow:visible" width="2" height="3.2" viewBox="0 0 2 3.2"><polygon points="0,0 2,1.6 0,3.2" fill="#444"/></svg>
<div style="left:315.2px;top:406px;width:436px;height:6.3px;background:#efefef;"></div>
<div style="left:315.5px;top:406.3px;width:4.8px;height:5.8px;background:#fff;border:0.5px solid #bbb"></div>
<svg style="left:317px;top:407.6px;position:absolute;overflow:visible" width="2" height="3.2" viewBox="0 0 2 3.2"><polygon points="2,0 0,1.6 2,3.2" fill="#444"/></svg>
<div style="left:744.5px;top:406.3px;width:5px;height:5.8px;background:#fff;border:0.5px solid #999"></div>
<svg style="left:746.2px;top:407.6px;position:absolute;overflow:visible" width="2" height="3.2" viewBox="0 0 2 3.2"><polygon points="0,0 2,1.6 0,3.2" fill="#333"/></svg>
<div style="left:177.3px;top:412.7px;width:37px;height:7.5px;background:#64c8da;"></div>
<div class="t" style="left:179.5px;top:414.2px;font-size:4.2px;color:#1e4a5a;">Sequence Editor</div>
<div class="t" style="left:217.5px;top:414.2px;font-size:4.2px;color:#333;">Path Editor</div>
<div class="t" style="left:244px;top:414.2px;font-size:4.2px;color:#333;">Collision Viewer</div>
<div class="t" style="left:280px;top:414.2px;font-size:4.2px;color:#333;">MRgs</div>
<svg style="left:275px;top:381px;position:absolute" width="8" height="10" viewBox="0 0 8 10"><path d="M1,1 L1,8 L2.8,6.3 L4.2,9 L5.2,8.5 L3.9,5.8 L6.2,5.8 Z" fill="#fff" stroke="#555" stroke-width="0.5"/></svg>

<!-- STATUS -->
<div class="t" style="left:20px;top:423.5px;color:#444;font-size:4.2px">[0002][0007] Move to loc wp1 (R2_WELD)</div>
<div class="t" style="left:537.5px;top:423.5px;color:#444;font-size:4.2px">Snap Pick Intent</div>
<div class="t" style="left:577px;top:423.5px;color:#444;font-size:4.2px">Component Pick Level</div>
<svg style="left:627px;top:422.5px;position:absolute" width="6" height="6" viewBox="0 0 6 6"><path d="M3,0.3 v5.4 M0.3,3 h5.4" stroke="#333" stroke-width="0.6"/><path d="M3,0 l-1,1.2 h2 z M3,6 l-1,-1.2 h2 z M0,3 l1.2,-1 v2 z M6,3 l-1.2,-1 v2 z" fill="#333"/></svg>
<div class="t" style="left:634.5px;top:423.5px;color:#444;font-size:4.2px">0, 0, 0</div>
<div class="t" style="left:694.5px;top:423.5px;color:#444;font-size:4.2px">Standard Mode</div>
</body></html>
